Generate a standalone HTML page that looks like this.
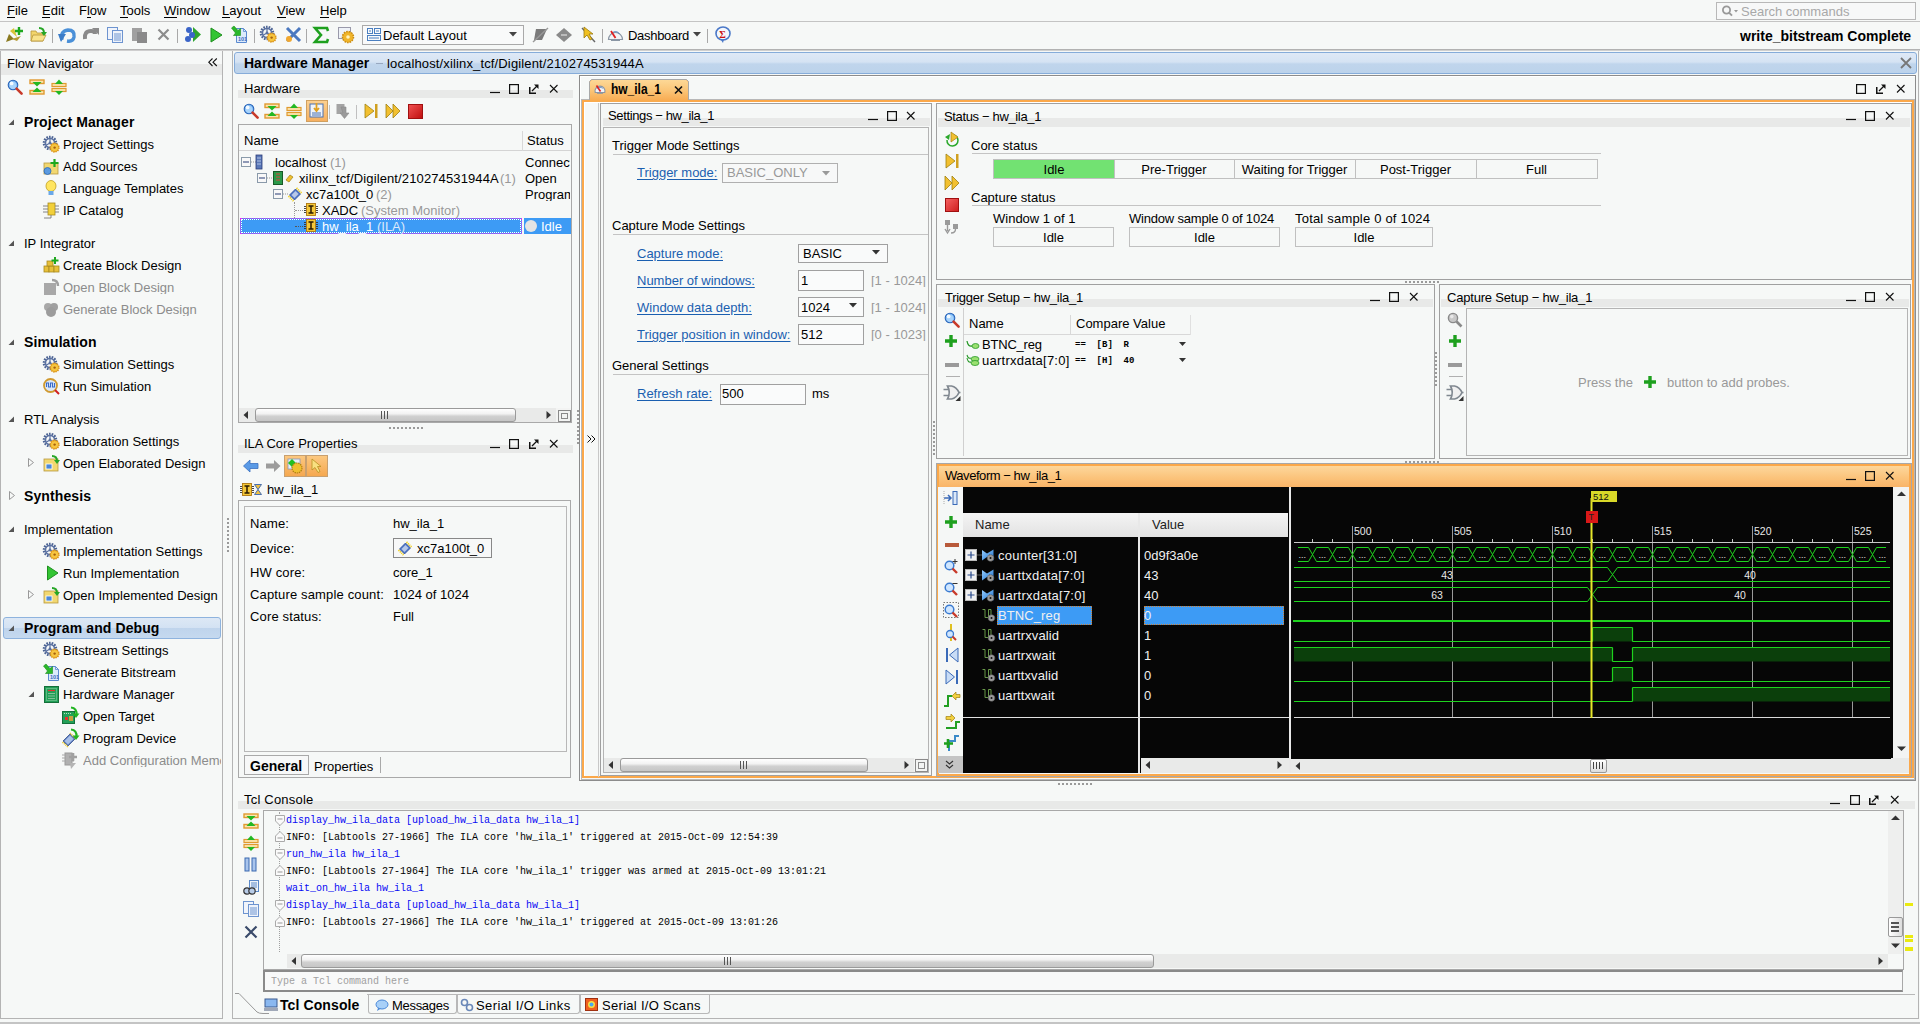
<!DOCTYPE html>
<html><head><meta charset="utf-8"><title>Vivado Hardware Manager</title>
<style>
html,body{margin:0;padding:0;}
body{width:1920px;height:1024px;overflow:hidden;position:relative;background:#f6f8f7;font-family:'Liberation Sans', sans-serif;}
body>div{position:absolute;}
.t{position:absolute;white-space:nowrap;line-height:1;}
svg{overflow:visible;}
</style></head><body>
<div class="t" style="left:7px;top:4.00px;font-size:13px;font-family:'Liberation Sans', sans-serif;color:#000;">File</div><div class="t" style="left:42px;top:4.00px;font-size:13px;font-family:'Liberation Sans', sans-serif;color:#000;">Edit</div><div class="t" style="left:79px;top:4.00px;font-size:13px;font-family:'Liberation Sans', sans-serif;color:#000;">Flow</div><div class="t" style="left:120px;top:4.00px;font-size:13px;font-family:'Liberation Sans', sans-serif;color:#000;">Tools</div><div class="t" style="left:164px;top:4.00px;font-size:13px;font-family:'Liberation Sans', sans-serif;color:#000;">Window</div><div class="t" style="left:222px;top:4.00px;font-size:13px;font-family:'Liberation Sans', sans-serif;color:#000;">Layout</div><div class="t" style="left:277px;top:4.00px;font-size:13px;font-family:'Liberation Sans', sans-serif;color:#000;">View</div><div class="t" style="left:320px;top:4.00px;font-size:13px;font-family:'Liberation Sans', sans-serif;color:#000;">Help</div><div style="left:7px;top:17px;width:8px;height:1px;background:#000"></div><div style="left:42px;top:17px;width:8px;height:1px;background:#000"></div><div style="left:87px;top:17px;width:4px;height:1px;background:#000"></div><div style="left:120px;top:17px;width:8px;height:1px;background:#000"></div><div style="left:164px;top:17px;width:13px;height:1px;background:#000"></div><div style="left:222px;top:17px;width:8px;height:1px;background:#000"></div><div style="left:277px;top:17px;width:9px;height:1px;background:#000"></div><div style="left:320px;top:17px;width:9px;height:1px;background:#000"></div><div style="left:0px;top:21px;width:1920px;height:1px;background:#c4c4c4"></div><div style="left:1716px;top:2px;width:200px;height:18px;box-sizing:border-box;border:1px solid #b8b8b8;background:#f7f8f8;"></div><svg style="position:absolute;left:1721px;top:5px;" width="20" height="12" viewBox="0 0 20 12"><circle cx="5.5" cy="5" r="3.6" fill="none" stroke="#999" stroke-width="1.8"/><line x1="8" y1="7.6" x2="11" y2="10.6" stroke="#999" stroke-width="2"/><path d="M13 5 L17 5 L15 7.5 Z" fill="#999"/></svg><div class="t" style="left:1741px;top:5.00px;font-size:13px;font-family:'Liberation Sans', sans-serif;color:#a8a8a8;">Search commands</div><div style="left:52px;top:29px;width:1px;height:14px;background:#a8a8a8"></div><div style="left:177px;top:29px;width:1px;height:14px;background:#a8a8a8"></div><div style="left:254px;top:29px;width:1px;height:14px;background:#a8a8a8"></div><div style="left:306px;top:29px;width:1px;height:14px;background:#a8a8a8"></div><div style="left:602px;top:29px;width:1px;height:14px;background:#a8a8a8"></div><div style="left:707px;top:29px;width:1px;height:14px;background:#a8a8a8"></div><svg style="position:absolute;left:5px;top:26px;" width="18" height="17" viewBox="0 0 18 17"><path d="M1 16 L4 8 L9 13 Z" fill="#8a7a20"/><path d="M5 5 L9 2 L12 11 Z" fill="#d8c43a"/><path d="M7 13 L16 10 L12 15 Z" fill="#b49a32"/><path d="M14 1 L14 9 M10 5 L18 5" stroke="#1ea81e" stroke-width="2.4"/></svg><svg style="position:absolute;left:30px;top:27px;" width="17" height="16" viewBox="0 0 17 16"><path d="M1 4 L6 4 L7 6 L13 6 L13 14 L1 14 Z" fill="#f2d56b" stroke="#b8963a" stroke-width="0.8"/><path d="M3 8 L16 8 L13 14 L1 14 Z" fill="#f8e28a" stroke="#b8963a" stroke-width="0.8"/><path d="M9 1 Q14 1 14 6" fill="none" stroke="#26a626" stroke-width="2"/><path d="M11 5 L17 5 L14 9 Z" fill="#26a626"/></svg><svg style="position:absolute;left:58px;top:27px;" width="18" height="16" viewBox="0 0 18 16"><path d="M4 13 Q2 4 10 3 Q17 3 16 10 Q15 15 9 14" fill="none" stroke="#4a90d8" stroke-width="3.5"/><path d="M0 7 L8 7 L3 15 Z" fill="#3a7cc8"/></svg><svg style="position:absolute;left:82px;top:27px;" width="18" height="16" viewBox="0 0 18 16"><path d="M3 12 Q2 4 9 4 Q13 4 13 7" fill="none" stroke="#8a8a8a" stroke-width="4"/><path d="M10 1 L17 1 L17 8 Z" fill="#8a8a8a"/></svg><svg style="position:absolute;left:107px;top:27px;" width="17" height="16" viewBox="0 0 17 16"><rect x="0.5" y="0.5" width="10" height="12" fill="#f0f4fb" stroke="#6d94d0"/><rect x="5.5" y="3.5" width="10" height="12" fill="#eef3fb" stroke="#6d94d0"/><path d="M7 7 H14 M7 9 H14 M7 11 H14 M7 13 H14" stroke="#6d94d0"/></svg><svg style="position:absolute;left:131px;top:27px;" width="17" height="16" viewBox="0 0 17 16"><rect x="1" y="1" width="10" height="13" fill="#a0a0a0"/><rect x="6" y="5" width="10" height="11" fill="#8a8a8a"/></svg><svg style="position:absolute;left:157px;top:28px;" width="13" height="13" viewBox="0 0 13 13"><path d="M1.5 1.5 L11.5 11.5 M11.5 1.5 L1.5 11.5" stroke="#8c8c8c" stroke-width="2.2"/></svg><svg style="position:absolute;left:184px;top:26px;" width="17" height="17" viewBox="0 0 17 17"><path d="M9 1 L17 8.5 L9 16 Z" fill="#2ea52e"/><circle cx="5" cy="4" r="3" fill="#3a64c8"/><circle cx="8" cy="9" r="3" fill="#3a64c8"/><circle cx="4" cy="13" r="3" fill="#3a64c8"/></svg><svg style="position:absolute;left:209px;top:27px;" width="14" height="16" viewBox="0 0 14 16"><path d="M2 1 L13 8 L2 15 Z" fill="#33c533" stroke="#1f8f1f" stroke-width="1"/></svg><svg style="position:absolute;left:231px;top:26px;" width="18" height="18" viewBox="0 0 18 18"><path d="M5.5 2.5 H12.5 L15.5 5.5 V16.5 H5.5 Z" fill="#dcebfb" stroke="#5a8ad0"/><path d="M12.5 2.5 V5.5 H15.5" fill="none" stroke="#5a8ad0" stroke-width="0.8"/><text x="7" y="14.5" font-size="5.5" font-weight="bold" fill="#3a6ac0" font-family="Liberation Sans">101</text><path d="M0.5 2 L3 0 L7 4.5 L9.5 2.5 L9.5 9.5 L2.5 9.5 L4.5 7 Z" fill="#2ab82a" stroke="#1a8a1a" stroke-width="0.6"/></svg><svg style="position:absolute;left:260px;top:26px;" width="17" height="17" viewBox="0 0 17 17"><circle cx="7" cy="7" r="6.1" fill="none" stroke="#4d6494" stroke-width="2.4" stroke-dasharray="1.6 1.1"/><circle cx="7" cy="7" r="4.6" fill="none" stroke="#5b72a2" stroke-width="1.7"/><circle cx="7" cy="7" r="1.4" fill="#5b72a2"/><path d="M7 7 V2.5 M7 7 L3 9.3 M7 7 L11 9.3" stroke="#5b72a2" stroke-width="1.2"/><circle cx="11.6" cy="11.6" r="4.3" fill="#f4bc30" stroke="#d89018" stroke-width="1.6" stroke-dasharray="1.3 0.9"/><circle cx="11.6" cy="11.6" r="3.2" fill="#f6c640"/><circle cx="11.6" cy="11.6" r="1.2" fill="#a8600c"/></svg><svg style="position:absolute;left:285px;top:26px;" width="17" height="17" viewBox="0 0 17 17"><path d="M2 2 L15 15 M15 2 L2 15" stroke="#4a78c0" stroke-width="3"/><circle cx="4" cy="13" r="3" fill="#f0a830"/></svg><svg style="position:absolute;left:314px;top:27px;" width="15" height="16" viewBox="0 0 15 16"><path d="M14 4 L13 1 L1 1 L7 8 L1 15 L13 15 L14 12" fill="none" stroke="#1ea01e" stroke-width="2.6"/></svg><svg style="position:absolute;left:338px;top:27px;" width="17" height="17" viewBox="0 0 17 17"><rect x="0.5" y="0.5" width="12" height="11" fill="#eef2f8" stroke="#99a"/><circle cx="10" cy="10" r="5.5" fill="#f0b52a" stroke="#c98a10" stroke-width="1.5" stroke-dasharray="1.6 1"/><circle cx="10" cy="10" r="1.8" fill="#fff4c0"/></svg><svg style="position:absolute;left:532px;top:27px;" width="17" height="16" viewBox="0 0 17 16"><path d="M4 2 L15 2 L10 13 L2 13 Z" fill="#7a7a7a"/><path d="M1 15 L16 1" stroke="#999" stroke-width="1.4"/></svg><svg style="position:absolute;left:556px;top:27px;" width="17" height="16" viewBox="0 0 17 16"><path d="M8 1 L16 8 L8 15 L0 8 Z" fill="#8a8a8a"/><path d="M5 8 L11 8" stroke="#bbb" stroke-width="2"/></svg><svg style="position:absolute;left:580px;top:26px;" width="17" height="18" viewBox="0 0 17 18"><path d="M2 2 L15 16" stroke="#666" stroke-width="1.4"/><path d="M4 1 L4 12 L7 9 L10 14 L12 13 L9 8 L13 8 Z" fill="#f0c020" stroke="#9a7a10" stroke-width="0.8"/></svg><svg style="position:absolute;left:607px;top:28px;" width="17" height="14" viewBox="0 0 17 14"><path d="M1.5 11.5 A7 7 0 1 1 15.5 11.5 Z" fill="#f2f4f6" stroke="#8a96a4" stroke-width="1.2"/><path d="M4.5 6 A4.5 4.5 0 0 1 12.5 6" fill="none" stroke="#4a7ab8" stroke-width="0.9"/><path d="M4 3 L8.5 10" stroke="#e02020" stroke-width="1.8"/><rect x="4" y="11.5" width="9" height="1.5" fill="#8a96a4"/></svg><div class="t" style="left:628px;top:29.00px;font-size:13px;font-family:'Liberation Sans', sans-serif;color:#000;letter-spacing:-0.3px">Dashboard</div><svg style="position:absolute;left:693px;top:32px;" width="9" height="5" viewBox="0 0 9 5"><path d="M0 0 L8 0 L4 4.5 Z" fill="#444"/></svg><svg style="position:absolute;left:715px;top:26px;" width="17" height="17" viewBox="0 0 17 17"><ellipse cx="8" cy="7.5" rx="7" ry="6.5" fill="#f4f7fc" stroke="#4a78c8" stroke-width="1.6"/><path d="M6 14 L8 17 L9 13" fill="#4a78c8"/><text x="4.3" y="11.5" font-size="10" font-weight="bold" fill="#cc1111" font-family="Liberation Serif">&#931;</text></svg><div style="left:362px;top:25px;width:162px;height:20px;box-sizing:border-box;border:1px solid #a9a9a9;background:#f9fafa;"></div><svg style="position:absolute;left:367px;top:28px;" width="14" height="14" viewBox="0 0 14 14"><rect x="0.5" y="0.5" width="5" height="5" fill="none" stroke="#4a7fc0"/><rect x="7.5" y="0.5" width="6" height="5" fill="none" stroke="#4a7fc0"/><rect x="0.5" y="7.5" width="13" height="5" fill="none" stroke="#4a7fc0"/><line x1="2" y1="3" x2="4" y2="3" stroke="#4a7fc0"/><line x1="9" y1="3" x2="12" y2="3" stroke="#4a7fc0"/><line x1="2" y1="10" x2="12" y2="10" stroke="#4a7fc0"/></svg><div class="t" style="left:383px;top:29.00px;font-size:13px;font-family:'Liberation Sans', sans-serif;color:#000;">Default Layout</div><svg style="position:absolute;left:509px;top:32px;" width="9" height="5" viewBox="0 0 9 5"><path d="M0 0 L8 0 L4 4.5 Z" fill="#444"/></svg><div class="t" style="left:1740px;top:29.15px;font-size:14px;font-family:'Liberation Sans', sans-serif;font-weight:bold;color:#000;">write_bitstream Complete</div><div style="left:0px;top:49px;width:1920px;height:1px;background:#b2b2b2"></div><div style="left:0px;top:50px;width:1920px;height:1px;background:#cfcfcf"></div><div style="left:0px;top:51px;width:1px;height:968px;background:#b4b4b4"></div><div style="left:222px;top:51px;width:1px;height:968px;background:#b4b4b4"></div><div style="left:0px;top:1018px;width:223px;height:1px;background:#b4b4b4"></div><div style="left:1px;top:64px;width:221px;height:11px;background:#e8e9e8"></div><div class="t" style="left:7px;top:57.00px;font-size:13px;font-family:'Liberation Sans', sans-serif;color:#000;">Flow Navigator</div><svg style="position:absolute;left:208px;top:58px;" width="10" height="9" viewBox="0 0 10 9"><path d="M4.5 0.5 L0.8 4.2 L4.5 8 M8.8 0.5 L5 4.2 L8.8 8" fill="none" stroke="#111" stroke-width="1.1"/></svg><svg style="position:absolute;left:43px;top:136px;" width="17" height="17" viewBox="0 0 17 17"><circle cx="7" cy="7" r="6.1" fill="none" stroke="#4d6494" stroke-width="2.4" stroke-dasharray="1.6 1.1"/><circle cx="7" cy="7" r="4.6" fill="none" stroke="#5b72a2" stroke-width="1.7"/><circle cx="7" cy="7" r="1.4" fill="#5b72a2"/><path d="M7 7 V2.5 M7 7 L3 9.3 M7 7 L11 9.3" stroke="#5b72a2" stroke-width="1.2"/><circle cx="11.6" cy="11.6" r="4.3" fill="#f4bc30" stroke="#d89018" stroke-width="1.6" stroke-dasharray="1.3 0.9"/><circle cx="11.6" cy="11.6" r="3.2" fill="#f6c640"/><circle cx="11.6" cy="11.6" r="1.2" fill="#a8600c"/></svg><svg style="position:absolute;left:43px;top:356px;" width="17" height="17" viewBox="0 0 17 17"><circle cx="7" cy="7" r="6.1" fill="none" stroke="#4d6494" stroke-width="2.4" stroke-dasharray="1.6 1.1"/><circle cx="7" cy="7" r="4.6" fill="none" stroke="#5b72a2" stroke-width="1.7"/><circle cx="7" cy="7" r="1.4" fill="#5b72a2"/><path d="M7 7 V2.5 M7 7 L3 9.3 M7 7 L11 9.3" stroke="#5b72a2" stroke-width="1.2"/><circle cx="11.6" cy="11.6" r="4.3" fill="#f4bc30" stroke="#d89018" stroke-width="1.6" stroke-dasharray="1.3 0.9"/><circle cx="11.6" cy="11.6" r="3.2" fill="#f6c640"/><circle cx="11.6" cy="11.6" r="1.2" fill="#a8600c"/></svg><svg style="position:absolute;left:43px;top:433px;" width="17" height="17" viewBox="0 0 17 17"><circle cx="7" cy="7" r="6.1" fill="none" stroke="#4d6494" stroke-width="2.4" stroke-dasharray="1.6 1.1"/><circle cx="7" cy="7" r="4.6" fill="none" stroke="#5b72a2" stroke-width="1.7"/><circle cx="7" cy="7" r="1.4" fill="#5b72a2"/><path d="M7 7 V2.5 M7 7 L3 9.3 M7 7 L11 9.3" stroke="#5b72a2" stroke-width="1.2"/><circle cx="11.6" cy="11.6" r="4.3" fill="#f4bc30" stroke="#d89018" stroke-width="1.6" stroke-dasharray="1.3 0.9"/><circle cx="11.6" cy="11.6" r="3.2" fill="#f6c640"/><circle cx="11.6" cy="11.6" r="1.2" fill="#a8600c"/></svg><svg style="position:absolute;left:43px;top:543px;" width="17" height="17" viewBox="0 0 17 17"><circle cx="7" cy="7" r="6.1" fill="none" stroke="#4d6494" stroke-width="2.4" stroke-dasharray="1.6 1.1"/><circle cx="7" cy="7" r="4.6" fill="none" stroke="#5b72a2" stroke-width="1.7"/><circle cx="7" cy="7" r="1.4" fill="#5b72a2"/><path d="M7 7 V2.5 M7 7 L3 9.3 M7 7 L11 9.3" stroke="#5b72a2" stroke-width="1.2"/><circle cx="11.6" cy="11.6" r="4.3" fill="#f4bc30" stroke="#d89018" stroke-width="1.6" stroke-dasharray="1.3 0.9"/><circle cx="11.6" cy="11.6" r="3.2" fill="#f6c640"/><circle cx="11.6" cy="11.6" r="1.2" fill="#a8600c"/></svg><svg style="position:absolute;left:43px;top:642px;" width="17" height="17" viewBox="0 0 17 17"><circle cx="7" cy="7" r="6.1" fill="none" stroke="#4d6494" stroke-width="2.4" stroke-dasharray="1.6 1.1"/><circle cx="7" cy="7" r="4.6" fill="none" stroke="#5b72a2" stroke-width="1.7"/><circle cx="7" cy="7" r="1.4" fill="#5b72a2"/><path d="M7 7 V2.5 M7 7 L3 9.3 M7 7 L11 9.3" stroke="#5b72a2" stroke-width="1.2"/><circle cx="11.6" cy="11.6" r="4.3" fill="#f4bc30" stroke="#d89018" stroke-width="1.6" stroke-dasharray="1.3 0.9"/><circle cx="11.6" cy="11.6" r="3.2" fill="#f6c640"/><circle cx="11.6" cy="11.6" r="1.2" fill="#a8600c"/></svg><svg style="position:absolute;left:43px;top:159px;" width="17" height="16" viewBox="0 0 17 16"><rect x="1" y="4" width="14" height="11" fill="#f2d870" stroke="#b89a40" stroke-width="0.8"/><circle cx="4.5" cy="12" r="3.5" fill="#5a9ae0" stroke="#2a68b8" stroke-width="0.8"/><path d="M11.5 0 L11.5 8 M7.5 4 L15.5 4" stroke="#1ea81e" stroke-width="2.2"/></svg><svg style="position:absolute;left:45px;top:180px;" width="12" height="17" viewBox="0 0 12 17"><ellipse cx="6" cy="6" rx="5" ry="5.5" fill="#ffe560" stroke="#c0a020" stroke-width="0.8"/><rect x="3.5" y="11" width="5" height="4" fill="#6aa8e8"/></svg><svg style="position:absolute;left:43px;top:202px;" width="17" height="17" viewBox="0 0 17 17"><rect x="5" y="1" width="7" height="12" fill="#f2d03a" stroke="#a88a20" stroke-width="0.8"/><path d="M0 4 H5 M0 7 H5 M0 10 H5 M12 4 H16 M12 7 H16 M12 10 H16 M1 16 H8 M8 13 V16" stroke="#777" stroke-width="0.9"/></svg><svg style="position:absolute;left:43px;top:257px;" width="17" height="17" viewBox="0 0 17 17"><rect x="1" y="9" width="5" height="6" fill="#e8c03a" stroke="#a88a20" stroke-width="0.8"/><rect x="6" y="9" width="5" height="6" fill="#e8c03a" stroke="#a88a20" stroke-width="0.8"/><rect x="11" y="9" width="5" height="6" fill="#e8c03a" stroke="#a88a20" stroke-width="0.8"/><rect x="4" y="4" width="6" height="5" fill="#e8c03a" stroke="#a88a20" stroke-width="0.8"/><path d="M12 0 L12 7 M8.5 3.5 L15.5 3.5" stroke="#1ea81e" stroke-width="2"/></svg><svg style="position:absolute;left:43px;top:279px;" width="17" height="17" viewBox="0 0 17 17"><rect x="1" y="4" width="12" height="12" fill="#a8a8a8"/><path d="M9 1 Q15 1 15 7" fill="none" stroke="#a0a0a0" stroke-width="2.4"/></svg><svg style="position:absolute;left:43px;top:301px;" width="17" height="17" viewBox="0 0 17 17"><circle cx="5" cy="6" r="4" fill="#a8a8a8"/><circle cx="11" cy="6" r="4" fill="#a0a0a0"/><circle cx="8" cy="11" r="5" fill="#9c9c9c"/></svg><svg style="position:absolute;left:43px;top:378px;" width="17" height="17" viewBox="0 0 17 17"><circle cx="7.5" cy="7.5" r="6.5" fill="#dbe8f8" stroke="#d09a30" stroke-width="1.8"/><path d="M3.5 9 V5 H5.5 V9 H7.5 V5 H9.5 V9 H11.5 V5" fill="none" stroke="#3a6ac8" stroke-width="1.1"/><path d="M12 12 L16 16" stroke="#d02020" stroke-width="2"/></svg><svg style="position:absolute;left:43px;top:456px;" width="17" height="16" viewBox="0 0 17 16"><rect x="1" y="3" width="14" height="12" fill="#f2d870" stroke="#b89a40" stroke-width="0.8"/><rect x="3" y="8" width="6" height="5" fill="#4a88d8" stroke="#fff" stroke-width="0.8"/><path d="M9 0 Q14 0 14 5" fill="none" stroke="#26a626" stroke-width="2"/><path d="M11 4 L17 4 L14 8 Z" fill="#26a626"/></svg><svg style="position:absolute;left:43px;top:588px;" width="17" height="16" viewBox="0 0 17 16"><rect x="1" y="3" width="14" height="12" fill="#f2d870" stroke="#b89a40" stroke-width="0.8"/><rect x="3" y="8" width="6" height="5" fill="#4a88d8" stroke="#fff" stroke-width="0.8"/><path d="M9 0 Q14 0 14 5" fill="none" stroke="#26a626" stroke-width="2"/><path d="M11 4 L17 4 L14 8 Z" fill="#26a626"/></svg><svg style="position:absolute;left:46px;top:565px;" width="13" height="16" viewBox="0 0 13 16"><path d="M1.5 1 L12 8 L1.5 15 Z" fill="#33c533" stroke="#1f8f1f"/></svg><svg style="position:absolute;left:43px;top:664px;" width="18" height="18" viewBox="0 0 18 18"><path d="M5.5 2.5 H12.5 L15.5 5.5 V16.5 H5.5 Z" fill="#dcebfb" stroke="#5a8ad0"/><path d="M12.5 2.5 V5.5 H15.5" fill="none" stroke="#5a8ad0" stroke-width="0.8"/><text x="7" y="14.5" font-size="5.5" font-weight="bold" fill="#3a6ac0" font-family="Liberation Sans">101</text><path d="M0.5 2 L3 0 L7 4.5 L9.5 2.5 L9.5 9.5 L2.5 9.5 L4.5 7 Z" fill="#2ab82a" stroke="#1a8a1a" stroke-width="0.6"/></svg><svg style="position:absolute;left:44px;top:686px;" width="15" height="17" viewBox="0 0 15 17"><rect x="0.5" y="0.5" width="14" height="16" fill="#22a058" stroke="#14703a"/><rect x="2.5" y="2.5" width="10" height="12" fill="none" stroke="#b8e0c0" stroke-width="0.8" stroke-dasharray="1 1"/><path d="M4 4.5 H11" stroke="#e83030" stroke-width="1.2"/><path d="M4 7.5 H11 M4 10 H11 M4 12.5 H11" stroke="#9ac8a8" stroke-width="0.8"/></svg><svg style="position:absolute;left:62px;top:707px;" width="17" height="18" viewBox="0 0 17 18"><rect x="0.5" y="4.5" width="12" height="12" fill="#22a058" stroke="#14703a"/><path d="M2 6.5 H10" stroke="#b8e0c0" stroke-dasharray="1 1"/><rect x="3" y="10" width="3" height="3" fill="#e83030"/><rect x="7" y="9" width="4" height="5" fill="#c8a040"/><path d="M9 0.5 Q15 1 14.5 8" fill="none" stroke="#22b422" stroke-width="2.2"/><path d="M10.5 6.5 L17.5 6.5 L14 11 Z" fill="#22b422"/></svg><svg style="position:absolute;left:62px;top:729px;" width="17" height="18" viewBox="0 0 17 18"><path d="M1 12 L8 5 L13 10 L6 17 Z" fill="#5c7cc0" stroke="#34508a" stroke-width="0.8"/><path d="M2.5 12 L8 6.5 L11.5 10 L6 15.5 Z" fill="#a8c0e8"/><path d="M0.5 13 L6 18 M8 4 L13.5 9.5" stroke="#e8c830" stroke-width="1.6" stroke-dasharray="1.2 0.8"/><path d="M9 0.5 Q15 1 14.5 8" fill="none" stroke="#22b422" stroke-width="2.2"/><path d="M10.5 6.5 L17.5 6.5 L14 11 Z" fill="#22b422"/></svg><svg style="position:absolute;left:62px;top:751px;" width="17" height="18" viewBox="0 0 17 18"><rect x="3" y="2" width="7" height="12" fill="#b0b0b0" stroke="#9a9a9a"/><path d="M0 4 H3 M0 7 H3 M0 10 H3 M10 4 H12 M10 7 H12 M10 10 H12" stroke="#a8a8a8"/><path d="M11 2 V10 M7 6 H15" stroke="#a0a0a0" stroke-width="2.6"/><path d="M8 12 L14 12 L9 18 Z" fill="#b4b4b4"/></svg><svg style="position:absolute;left:7px;top:79px;" width="16" height="16" viewBox="0 0 16 16"><circle cx="6" cy="6" r="4.8" fill="#7ab8f4" stroke="#2a64b8" stroke-width="1.1"/><circle cx="6" cy="6.5" r="3.4" fill="#a8d4fc"/><circle cx="4.6" cy="4.4" r="1.9" fill="#f4faff"/><path d="M9.6 9.6 L14.6 14.6" stroke="#c83a2a" stroke-width="2.6" stroke-linecap="round"/></svg><svg style="position:absolute;left:29px;top:79px;" width="16" height="16" viewBox="0 0 16 16"><rect x="1" y="1" width="14" height="3.5" fill="#fbe6b0" stroke="#e09a30" stroke-width="1.4"/><rect x="1" y="11.5" width="14" height="3.5" fill="#fbe6b0" stroke="#e09a30" stroke-width="1.4"/><path d="M3.5 3 L12.5 3 L8 7.5 Z" fill="#22b822"/><path d="M3.5 13 L12.5 13 L8 8.5 Z" fill="#22b822"/></svg><svg style="position:absolute;left:51px;top:79px;" width="16" height="16" viewBox="0 0 16 16"><rect x="1" y="4.5" width="14" height="3" fill="#fbe6b0" stroke="#e09a30" stroke-width="1.2"/><rect x="1" y="9.5" width="14" height="3" fill="#fbe6b0" stroke="#e09a30" stroke-width="1.2"/><path d="M4 5 L12 5 L8 0.5 Z" fill="#22b822"/><path d="M4 12 L12 12 L8 16 Z" fill="#22b822"/></svg><div style="left:227px;top:518px;width:2px;height:2px;background:#9a9a9a"></div><div style="left:227px;top:522px;width:2px;height:2px;background:#9a9a9a"></div><div style="left:227px;top:526px;width:2px;height:2px;background:#9a9a9a"></div><div style="left:227px;top:530px;width:2px;height:2px;background:#9a9a9a"></div><div style="left:227px;top:534px;width:2px;height:2px;background:#9a9a9a"></div><div style="left:227px;top:538px;width:2px;height:2px;background:#9a9a9a"></div><div style="left:227px;top:542px;width:2px;height:2px;background:#9a9a9a"></div><div style="left:227px;top:546px;width:2px;height:2px;background:#9a9a9a"></div><div style="left:227px;top:550px;width:2px;height:2px;background:#9a9a9a"></div><div style="left:3px;top:617px;width:216px;height:20px;border:1px solid #8eb3de;border-radius:3px;background:linear-gradient(#dde8f5,#d3e2f3 50%,#bfd4ec 51%,#c5d9ef)"></div><div class="t" style="left:24px;top:115.15px;font-size:14px;font-family:'Liberation Sans', sans-serif;font-weight:bold;color:#000;letter-spacing:0.1px">Project Manager</div><svg style="position:absolute;left:8px;top:119px;" width="7" height="7" viewBox="0 0 7 7"><path d="M6 0.5 L6 6 L0.5 6 Z" fill="#555"/></svg><div class="t" style="left:63px;top:138.00px;font-size:13px;font-family:'Liberation Sans', sans-serif;color:#000;">Project Settings</div><div class="t" style="left:63px;top:160.00px;font-size:13px;font-family:'Liberation Sans', sans-serif;color:#000;">Add Sources</div><div class="t" style="left:63px;top:182.00px;font-size:13px;font-family:'Liberation Sans', sans-serif;color:#000;">Language Templates</div><div class="t" style="left:63px;top:204.00px;font-size:13px;font-family:'Liberation Sans', sans-serif;color:#000;">IP Catalog</div><div class="t" style="left:24px;top:237.00px;font-size:13px;font-family:'Liberation Sans', sans-serif;color:#000;">IP Integrator</div><svg style="position:absolute;left:8px;top:240px;" width="7" height="7" viewBox="0 0 7 7"><path d="M6 0.5 L6 6 L0.5 6 Z" fill="#555"/></svg><div class="t" style="left:63px;top:259.00px;font-size:13px;font-family:'Liberation Sans', sans-serif;color:#000;">Create Block Design</div><div class="t" style="left:63px;top:281.00px;font-size:13px;font-family:'Liberation Sans', sans-serif;color:#8c8c8c;width:158px;overflow:hidden">Open Block Design</div><div class="t" style="left:63px;top:303.00px;font-size:13px;font-family:'Liberation Sans', sans-serif;color:#8c8c8c;width:158px;overflow:hidden">Generate Block Design</div><div class="t" style="left:24px;top:335.15px;font-size:14px;font-family:'Liberation Sans', sans-serif;font-weight:bold;color:#000;letter-spacing:0.1px">Simulation</div><svg style="position:absolute;left:8px;top:339px;" width="7" height="7" viewBox="0 0 7 7"><path d="M6 0.5 L6 6 L0.5 6 Z" fill="#555"/></svg><div class="t" style="left:63px;top:358.00px;font-size:13px;font-family:'Liberation Sans', sans-serif;color:#000;">Simulation Settings</div><div class="t" style="left:63px;top:380.00px;font-size:13px;font-family:'Liberation Sans', sans-serif;color:#000;">Run Simulation</div><div class="t" style="left:24px;top:413.00px;font-size:13px;font-family:'Liberation Sans', sans-serif;color:#000;">RTL Analysis</div><svg style="position:absolute;left:8px;top:416px;" width="7" height="7" viewBox="0 0 7 7"><path d="M6 0.5 L6 6 L0.5 6 Z" fill="#555"/></svg><div class="t" style="left:63px;top:435.00px;font-size:13px;font-family:'Liberation Sans', sans-serif;color:#000;">Elaboration Settings</div><div class="t" style="left:63px;top:457.00px;font-size:13px;font-family:'Liberation Sans', sans-serif;color:#000;">Open Elaborated Design</div><svg style="position:absolute;left:28px;top:458px;" width="7" height="10" viewBox="0 0 7 10"><path d="M0.5 0.5 L5.5 4.5 L0.5 8.5 Z" fill="none" stroke="#999"/></svg><div class="t" style="left:24px;top:489.15px;font-size:14px;font-family:'Liberation Sans', sans-serif;font-weight:bold;color:#000;letter-spacing:0.1px">Synthesis</div><svg style="position:absolute;left:9px;top:491px;" width="7" height="10" viewBox="0 0 7 10"><path d="M0.5 0.5 L5.5 4.5 L0.5 8.5 Z" fill="none" stroke="#999"/></svg><div class="t" style="left:24px;top:523.00px;font-size:13px;font-family:'Liberation Sans', sans-serif;color:#000;">Implementation</div><svg style="position:absolute;left:8px;top:526px;" width="7" height="7" viewBox="0 0 7 7"><path d="M6 0.5 L6 6 L0.5 6 Z" fill="#555"/></svg><div class="t" style="left:63px;top:545.00px;font-size:13px;font-family:'Liberation Sans', sans-serif;color:#000;">Implementation Settings</div><div class="t" style="left:63px;top:567.00px;font-size:13px;font-family:'Liberation Sans', sans-serif;color:#000;">Run Implementation</div><div class="t" style="left:63px;top:589.00px;font-size:13px;font-family:'Liberation Sans', sans-serif;color:#000;">Open Implemented Design</div><svg style="position:absolute;left:28px;top:590px;" width="7" height="10" viewBox="0 0 7 10"><path d="M0.5 0.5 L5.5 4.5 L0.5 8.5 Z" fill="none" stroke="#999"/></svg><div class="t" style="left:24px;top:621.15px;font-size:14px;font-family:'Liberation Sans', sans-serif;font-weight:bold;color:#000;letter-spacing:0.1px">Program and Debug</div><svg style="position:absolute;left:8px;top:625px;" width="7" height="7" viewBox="0 0 7 7"><path d="M6 0.5 L6 6 L0.5 6 Z" fill="#555"/></svg><div class="t" style="left:63px;top:644.00px;font-size:13px;font-family:'Liberation Sans', sans-serif;color:#000;">Bitstream Settings</div><div class="t" style="left:63px;top:666.00px;font-size:13px;font-family:'Liberation Sans', sans-serif;color:#000;">Generate Bitstream</div><div class="t" style="left:63px;top:688.00px;font-size:13px;font-family:'Liberation Sans', sans-serif;color:#000;">Hardware Manager</div><svg style="position:absolute;left:28px;top:691px;" width="7" height="7" viewBox="0 0 7 7"><path d="M6 0.5 L6 6 L0.5 6 Z" fill="#555"/></svg><div class="t" style="left:83px;top:710.00px;font-size:13px;font-family:'Liberation Sans', sans-serif;color:#000;">Open Target</div><div class="t" style="left:83px;top:732.00px;font-size:13px;font-family:'Liberation Sans', sans-serif;color:#000;">Program Device</div><div class="t" style="left:83px;top:754.00px;font-size:13px;font-family:'Liberation Sans', sans-serif;color:#8c8c8c;width:138px;overflow:hidden">Add Configuration Memory Device</div><div style="left:221px;top:750px;width:1px;height:26px;background:#f6f8f7"></div><div style="left:232px;top:51px;width:1px;height:968px;background:#b4b4b4"></div><div style="left:1918px;top:51px;width:1px;height:968px;background:#b4b4b4"></div><div style="left:232px;top:1018px;width:1687px;height:1px;background:#b4b4b4"></div><div style="left:0px;top:1022px;width:1920px;height:2px;background:#c4c4c4"></div><div style="left:234px;top:52px;width:1681px;height:20px;border:1px solid #86acd9;border-radius:3px;background:linear-gradient(#dfe9f6,#d5e3f3 45%,#c0d5ec 55%,#bcd3eb)"></div><div class="t" style="left:244px;top:56.15px;font-size:14px;font-family:'Liberation Sans', sans-serif;font-weight:bold;color:#000;">Hardware Manager</div><div style="left:376px;top:63px;width:7px;height:1px;background:#98a8c0"></div><div class="t" style="left:387px;top:57.00px;font-size:13px;font-family:'Liberation Sans', sans-serif;color:#000;letter-spacing:0.14px">localhost/xilinx_tcf/Digilent/210274531944A</div><svg style="position:absolute;left:1900px;top:57px;" width="12" height="12" viewBox="0 0 12 12"><path d="M1 1 L11 11 M11 1 L1 11" stroke="#777" stroke-width="1.8"/></svg><div style="left:238px;top:90px;width:335px;height:8px;background:#e8e9e8"></div><div class="t" style="left:244px;top:82.00px;font-size:13px;font-family:'Liberation Sans', sans-serif;color:#000;">Hardware</div><svg style="position:absolute;left:490px;top:84px;" width="10" height="10" viewBox="0 0 10 10"><line x1="0" y1="8.5" x2="10" y2="8.5" stroke="#111" stroke-width="1.2"/></svg><svg style="position:absolute;left:509px;top:84px;" width="10" height="10" viewBox="0 0 10 10"><rect x="0.6" y="0.6" width="8.8" height="8.8" fill="none" stroke="#111" stroke-width="1.2"/></svg><svg style="position:absolute;left:529px;top:84px;" width="10" height="10" viewBox="0 0 10 10"><path d="M0.75 3 L0.75 9.25 L7 9.25" fill="none" stroke="#111" stroke-width="1.5"/><path d="M3 7 L8.5 1.5" stroke="#111" stroke-width="1.3"/><path d="M5 0.5 L9.5 0.5 L9.5 5 Z" fill="#111"/></svg><svg style="position:absolute;left:549px;top:84px;" width="10" height="10" viewBox="0 0 10 10"><path d="M1 1 L8.5 8.5 M8.5 1 L1 8.5" stroke="#111" stroke-width="1.1"/></svg><svg style="position:absolute;left:243px;top:103px;" width="16" height="16" viewBox="0 0 16 16"><circle cx="6" cy="6" r="4.8" fill="#7ab8f4" stroke="#2a64b8" stroke-width="1.1"/><circle cx="6" cy="6.5" r="3.4" fill="#a8d4fc"/><circle cx="4.6" cy="4.4" r="1.9" fill="#f4faff"/><path d="M9.6 9.6 L14.6 14.6" stroke="#c83a2a" stroke-width="2.6" stroke-linecap="round"/></svg><svg style="position:absolute;left:264px;top:103px;" width="16" height="16" viewBox="0 0 16 16"><rect x="1" y="1" width="14" height="3.5" fill="#fbe6b0" stroke="#e09a30" stroke-width="1.4"/><rect x="1" y="11.5" width="14" height="3.5" fill="#fbe6b0" stroke="#e09a30" stroke-width="1.4"/><path d="M3.5 3 L12.5 3 L8 7.5 Z" fill="#22b822"/><path d="M3.5 13 L12.5 13 L8 8.5 Z" fill="#22b822"/></svg><svg style="position:absolute;left:286px;top:103px;" width="16" height="16" viewBox="0 0 16 16"><rect x="1" y="4.5" width="14" height="3" fill="#fbe6b0" stroke="#e09a30" stroke-width="1.2"/><rect x="1" y="9.5" width="14" height="3" fill="#fbe6b0" stroke="#e09a30" stroke-width="1.2"/><path d="M4 5 L12 5 L8 0.5 Z" fill="#22b822"/><path d="M4 12 L12 12 L8 16 Z" fill="#22b822"/></svg><div style="left:306px;top:100px;width:20px;height:20px;border:1px solid #d0a060;background:linear-gradient(#fcd090,#f6b060)"></div><svg style="position:absolute;left:309px;top:103px;" width="15" height="15" viewBox="0 0 15 15"><rect x="1" y="1" width="13" height="13" fill="#eef3fa" stroke="#4a70b0"/><path d="M3 10 H12 M3 12 H12" stroke="#4a70b0"/><path d="M7.5 0 V7 M5 5 L7.5 8 L10 5" fill="none" stroke="#e0a020" stroke-width="1.8"/></svg><div style="left:329px;top:105px;width:1px;height:14px;background:#c0c0c0"></div><svg style="position:absolute;left:336px;top:103px;" width="16" height="17" viewBox="0 0 16 17"><rect x="0.5" y="1" width="8" height="10" fill="#a4a4a4"/><path d="M5 4 H10 V10 H13 L8.5 15.5 L4 10 H7 Z" fill="#9a9a9a" stroke="#8a8a8a" stroke-width="0.6"/></svg><div style="left:356px;top:105px;width:1px;height:14px;background:#c0c0c0"></div><svg style="position:absolute;left:364px;top:103px;" width="14" height="16" viewBox="0 0 14 16"><path d="M1 1 L10 8 L1 15 Z" fill="#f2c030" stroke="#a08010" stroke-width="0.8"/><rect x="11" y="1" width="2.5" height="14" fill="#d0a020"/></svg><svg style="position:absolute;left:385px;top:103px;" width="16" height="16" viewBox="0 0 16 16"><path d="M1 1 L8 8 L1 15 Z" fill="#f2c030" stroke="#a08010" stroke-width="0.8"/><path d="M8 1 L15 8 L8 15 Z" fill="#f2c030" stroke="#a08010" stroke-width="0.8"/></svg><div style="left:408px;top:104px;width:13px;height:13px;background:linear-gradient(135deg,#f05050,#c01010);border:1px solid #a01010"></div><div style="left:238px;top:124px;width:334px;height:299px;box-sizing:border-box;border:1px solid #a9a9a9;"></div><div class="t" style="left:244px;top:134.00px;font-size:13px;font-family:'Liberation Sans', sans-serif;color:#000;">Name</div><div class="t" style="left:527px;top:134.00px;font-size:13px;font-family:'Liberation Sans', sans-serif;color:#000;">Status</div><div style="left:239px;top:150px;width:332px;height:1px;background:#d4d4d4"></div><div style="left:522px;top:131px;width:1px;height:20px;background:#d8d8d8"></div><svg style="position:absolute;left:241px;top:157px;" width="16" height="10" viewBox="0 0 16 10"><rect x="0.5" y="0.5" width="9" height="9" fill="#f8f8f8" stroke="#8a9aaa"/><path d="M2 5 H8" stroke="#4a5a8a" stroke-width="1.2"/><path d="M10 5 H15" stroke="#999" stroke-dasharray="1 1"/></svg><svg style="position:absolute;left:254px;top:154px;" width="10" height="16" viewBox="0 0 10 16"><rect x="2" y="1" width="6" height="14" fill="#5a78b8" stroke="#2a3a78" stroke-width="0.8"/><path d="M3 4 H7 M3 7 H7 M3 10 H7" stroke="#c8d4ee" stroke-width="0.8"/></svg><div class="t" style="left:275px;top:156.00px;font-size:13px;font-family:'Liberation Sans', sans-serif;color:#000;">localhost</div><div class="t" style="left:330px;top:156.00px;font-size:13px;font-family:'Liberation Sans', sans-serif;color:#999;">(1)</div><svg style="position:absolute;left:257px;top:173px;" width="16" height="10" viewBox="0 0 16 10"><rect x="0.5" y="0.5" width="9" height="9" fill="#f8f8f8" stroke="#8a9aaa"/><path d="M2 5 H8" stroke="#4a5a8a" stroke-width="1.2"/><path d="M10 5 H15" stroke="#999" stroke-dasharray="1 1"/></svg><svg style="position:absolute;left:273px;top:171px;" width="22" height="14" viewBox="0 0 22 14"><rect x="0.5" y="0.5" width="9" height="13" fill="#2a9a4a" stroke="#185a28"/><path d="M3 3 H7 M3 6 H7 M3 9 H7" stroke="#e04040"/><path d="M13 9 L17 4 L20 6 L16 11 Z" fill="#f0c030" stroke="#a08010" stroke-width="0.7"/></svg><div class="t" style="left:299px;top:172.00px;font-size:13px;font-family:'Liberation Sans', sans-serif;color:#000;letter-spacing:0.12px">xilinx_tcf/Digilent/210274531944A</div><div class="t" style="left:500px;top:172.00px;font-size:13px;font-family:'Liberation Sans', sans-serif;color:#999;">(1)</div><svg style="position:absolute;left:273px;top:189px;" width="16" height="10" viewBox="0 0 16 10"><rect x="0.5" y="0.5" width="9" height="9" fill="#f8f8f8" stroke="#8a9aaa"/><path d="M2 5 H8" stroke="#4a5a8a" stroke-width="1.2"/><path d="M10 5 H15" stroke="#999" stroke-dasharray="1 1"/></svg><svg style="position:absolute;left:288px;top:187px;" width="14" height="14" viewBox="0 0 14 14"><path d="M1.5 8 L7.5 2 L12.5 7 L6.5 13 Z" fill="#5078c8" stroke="#2a4a98" stroke-width="0.8"/><path d="M3.5 8 L7.5 4 L10.5 7 L6.5 11 Z" fill="#b8c8e8"/><path d="M0.5 9 L5.5 14 M8.5 1 L13.5 6" stroke="#f0d020" stroke-width="1.8" stroke-dasharray="1.2 0.8"/></svg><div class="t" style="left:306px;top:188.00px;font-size:13px;font-family:'Liberation Sans', sans-serif;color:#000;">xc7a100t_0</div><div class="t" style="left:376px;top:188.00px;font-size:13px;font-family:'Liberation Sans', sans-serif;color:#999;">(2)</div><div style="left:294px;top:202px;width:0;height:24px;border-left:1px dotted #999"></div><div style="left:295px;top:210px;width:10px;height:0;border-top:1px dotted #999"></div><svg style="position:absolute;left:304px;top:203px;" width="14" height="13" viewBox="0 0 14 13"><path d="M0 3.5 H2.5 M0 5.5 H2.5 M0 7.5 H2.5 M0 9.5 H2.5 M11.5 3.5 H14 M11.5 5.5 H14 M11.5 7.5 H14 M11.5 9.5 H14" stroke="#333" stroke-width="0.9"/><rect x="2.5" y="0.5" width="9" height="12" fill="#f4c838" stroke="#b07810" stroke-width="0.9"/><path d="M4.5 3 H9.5 M7 3 V10 M4.5 10 H9.5" stroke="#2a1a00" stroke-width="1.5"/></svg><div class="t" style="left:322px;top:204.00px;font-size:13px;font-family:'Liberation Sans', sans-serif;color:#000;">XADC</div><div class="t" style="left:361px;top:204.00px;font-size:13px;font-family:'Liberation Sans', sans-serif;color:#999;">(System Monitor)</div><div style="left:240px;top:218px;width:280px;height:14px;background:#3d9bf5;border:1px dotted #e030f0;outline:1px dotted #fff;outline-offset:-2px"></div><div style="left:524px;top:218px;width:47px;height:16px;background:#3d9bf5"></div><div style="left:295px;top:226px;width:10px;height:0;border-top:1px dotted #555"></div><svg style="position:absolute;left:304px;top:219px;" width="14" height="13" viewBox="0 0 14 13"><path d="M0 3.5 H2.5 M0 5.5 H2.5 M0 7.5 H2.5 M0 9.5 H2.5 M11.5 3.5 H14 M11.5 5.5 H14 M11.5 7.5 H14 M11.5 9.5 H14" stroke="#333" stroke-width="0.9"/><rect x="2.5" y="0.5" width="9" height="12" fill="#f4c838" stroke="#b07810" stroke-width="0.9"/><path d="M4.5 3 H9.5 M7 3 V10 M4.5 10 H9.5" stroke="#2a1a00" stroke-width="1.5"/></svg><div class="t" style="left:322px;top:220.00px;font-size:13px;font-family:'Liberation Sans', sans-serif;color:#fff;">hw_ila_1 <span style="color:#dce9fb">(ILA)</span></div><div style="left:525px;top:220px;width:12px;height:12px;border-radius:50%;background:#e4e4e4"></div><div class="t" style="left:541px;top:220.00px;font-size:13px;font-family:'Liberation Sans', sans-serif;color:#fff;">Idle</div><div class="t" style="left:525px;top:156.00px;font-size:13px;font-family:'Liberation Sans', sans-serif;color:#000;width:45px;overflow:hidden">Connect</div><div class="t" style="left:525px;top:172.00px;font-size:13px;font-family:'Liberation Sans', sans-serif;color:#000;">Open</div><div class="t" style="left:525px;top:188.00px;font-size:13px;font-family:'Liberation Sans', sans-serif;color:#000;width:45px;overflow:hidden">Program</div><div style="left:239px;top:408px;width:317px;height:14px;background:#e9eae9"></div><svg style="position:absolute;left:243px;top:411px;" width="6" height="8" viewBox="0 0 6 8"><path d="M5 0 L0.5 4 L5 8 Z" fill="#333"/></svg><svg style="position:absolute;left:546px;top:411px;" width="6" height="8" viewBox="0 0 6 8"><path d="M0.5 0 L5 4 L0.5 8 Z" fill="#333"/></svg><div style="left:255px;top:408px;width:259px;height:12px;border:1px solid #9a9a9a;border-radius:3px;background:linear-gradient(#ffffff,#f2f2f2 40%,#d0d0d0 60%,#c6c6c6)"></div><div style="left:381px;top:411px;width:1px;height:8px;background:#555"></div><div style="left:384px;top:411px;width:1px;height:8px;background:#555"></div><div style="left:387px;top:411px;width:1px;height:8px;background:#555"></div><div style="left:556px;top:408px;width:15px;height:14px;background:#f3f4f3"></div><div style="left:558px;top:410px;width:13px;height:12px;box-sizing:border-box;border:1px solid #8a8a8a;"></div><div style="left:561px;top:413px;width:7px;height:6px;box-sizing:border-box;border:1px solid #8a8a8a;"></div><div style="left:389px;top:427px;width:2px;height:2px;background:#9a9a9a"></div><div style="left:393px;top:427px;width:2px;height:2px;background:#9a9a9a"></div><div style="left:397px;top:427px;width:2px;height:2px;background:#9a9a9a"></div><div style="left:401px;top:427px;width:2px;height:2px;background:#9a9a9a"></div><div style="left:405px;top:427px;width:2px;height:2px;background:#9a9a9a"></div><div style="left:409px;top:427px;width:2px;height:2px;background:#9a9a9a"></div><div style="left:413px;top:427px;width:2px;height:2px;background:#9a9a9a"></div><div style="left:417px;top:427px;width:2px;height:2px;background:#9a9a9a"></div><div style="left:421px;top:427px;width:2px;height:2px;background:#9a9a9a"></div><div style="left:577px;top:410px;width:2px;height:2px;background:#9a9a9a"></div><div style="left:577px;top:414px;width:2px;height:2px;background:#9a9a9a"></div><div style="left:577px;top:418px;width:2px;height:2px;background:#9a9a9a"></div><div style="left:577px;top:422px;width:2px;height:2px;background:#9a9a9a"></div><div style="left:577px;top:426px;width:2px;height:2px;background:#9a9a9a"></div><div style="left:577px;top:430px;width:2px;height:2px;background:#9a9a9a"></div><div style="left:577px;top:434px;width:2px;height:2px;background:#9a9a9a"></div><div style="left:577px;top:438px;width:2px;height:2px;background:#9a9a9a"></div><div style="left:577px;top:442px;width:2px;height:2px;background:#9a9a9a"></div><div style="left:238px;top:445px;width:335px;height:8px;background:#e8e9e8"></div><div class="t" style="left:244px;top:437.00px;font-size:13px;font-family:'Liberation Sans', sans-serif;color:#000;">ILA Core Properties</div><svg style="position:absolute;left:490px;top:439px;" width="10" height="10" viewBox="0 0 10 10"><line x1="0" y1="8.5" x2="10" y2="8.5" stroke="#111" stroke-width="1.2"/></svg><svg style="position:absolute;left:509px;top:439px;" width="10" height="10" viewBox="0 0 10 10"><rect x="0.6" y="0.6" width="8.8" height="8.8" fill="none" stroke="#111" stroke-width="1.2"/></svg><svg style="position:absolute;left:529px;top:439px;" width="10" height="10" viewBox="0 0 10 10"><path d="M0.75 3 L0.75 9.25 L7 9.25" fill="none" stroke="#111" stroke-width="1.5"/><path d="M3 7 L8.5 1.5" stroke="#111" stroke-width="1.3"/><path d="M5 0.5 L9.5 0.5 L9.5 5 Z" fill="#111"/></svg><svg style="position:absolute;left:549px;top:439px;" width="10" height="10" viewBox="0 0 10 10"><path d="M1 1 L8.5 8.5 M8.5 1 L1 8.5" stroke="#111" stroke-width="1.1"/></svg><svg style="position:absolute;left:243px;top:459px;" width="16" height="14" viewBox="0 0 16 14"><path d="M0.5 7 L7 1 L7 4.5 L15 4.5 L15 9.5 L7 9.5 L7 13 Z" fill="#5a9ae6" stroke="#3a70c0" stroke-width="0.8"/></svg><svg style="position:absolute;left:265px;top:459px;" width="16" height="14" viewBox="0 0 16 14"><path d="M15.5 7 L9 1 L9 4.5 L1 4.5 L1 9.5 L9 9.5 L9 13 Z" fill="#9c9c9c"/></svg><div style="left:284px;top:455px;width:20px;height:20px;border:1px solid #c8a070;background:linear-gradient(#fcc880,#f5a850)"></div><div style="left:306px;top:455px;width:20px;height:20px;border:1px solid #c8a070;background:linear-gradient(#fcc880,#f5a850)"></div><svg style="position:absolute;left:287px;top:458px;" width="16" height="16" viewBox="0 0 16 16"><rect x="1" y="1" width="12" height="10" fill="#e8eef8" stroke="#8898b8" stroke-width="0.8"/><path d="M1 5 L5 1 L9 5 L5 9 Z" fill="#22c022"/><circle cx="10" cy="10" r="5" fill="#f0c030" stroke="#b08010" stroke-width="1.2" stroke-dasharray="1.4 0.8"/></svg><svg style="position:absolute;left:310px;top:458px;" width="14" height="16" viewBox="0 0 14 16"><path d="M2 1 L2 12 L5 9.5 L8 14.5 L10 13.5 L7.5 8.5 L11 8.5 Z" fill="#f8e080" stroke="#b89020" stroke-width="0.8"/></svg><svg style="position:absolute;left:240px;top:483px;" width="14" height="13" viewBox="0 0 14 13"><path d="M0 3.5 H2.5 M0 5.5 H2.5 M0 7.5 H2.5 M0 9.5 H2.5 M11.5 3.5 H14 M11.5 5.5 H14 M11.5 7.5 H14 M11.5 9.5 H14" stroke="#333" stroke-width="0.9"/><rect x="2.5" y="0.5" width="9" height="12" fill="#f4c838" stroke="#b07810" stroke-width="0.9"/><path d="M4.5 3 H9.5 M7 3 V10 M4.5 10 H9.5" stroke="#2a1a00" stroke-width="1.5"/></svg><svg style="position:absolute;left:254px;top:484px;" width="8" height="11" viewBox="0 0 8 11"><path d="M0.5 0.5 H7.5 L4 5.5 L7.5 10.5 H0.5 L4 5.5 Z" fill="#f0c040" stroke="#4a70b0" stroke-width="1"/></svg><div class="t" style="left:267px;top:483.00px;font-size:13px;font-family:'Liberation Sans', sans-serif;color:#000;">hw_ila_1</div><div style="left:238px;top:500px;width:333px;height:278px;box-sizing:border-box;border:1px solid #a9a9a9;"></div><div style="left:244px;top:506px;width:323px;height:246px;box-sizing:border-box;border:1px solid #b8b8b8;"></div><div class="t" style="left:250px;top:517.00px;font-size:13px;font-family:'Liberation Sans', sans-serif;color:#000;letter-spacing:0.15px">Name:</div><div class="t" style="left:393px;top:517.00px;font-size:13px;font-family:'Liberation Sans', sans-serif;color:#000;">hw_ila_1</div><div class="t" style="left:250px;top:542.00px;font-size:13px;font-family:'Liberation Sans', sans-serif;color:#000;letter-spacing:0.15px">Device:</div><div class="t" style="left:250px;top:566.00px;font-size:13px;font-family:'Liberation Sans', sans-serif;color:#000;letter-spacing:0.15px">HW core:</div><div class="t" style="left:393px;top:566.00px;font-size:13px;font-family:'Liberation Sans', sans-serif;color:#000;">core_1</div><div class="t" style="left:250px;top:588.00px;font-size:13px;font-family:'Liberation Sans', sans-serif;color:#000;letter-spacing:0.15px">Capture sample count:</div><div class="t" style="left:393px;top:588.00px;font-size:13px;font-family:'Liberation Sans', sans-serif;color:#000;">1024 of 1024</div><div class="t" style="left:250px;top:610.00px;font-size:13px;font-family:'Liberation Sans', sans-serif;color:#000;letter-spacing:0.15px">Core status:</div><div class="t" style="left:393px;top:610.00px;font-size:13px;font-family:'Liberation Sans', sans-serif;color:#000;">Full</div><div style="left:393px;top:538px;width:99px;height:20px;box-sizing:border-box;border:1px solid #888;background:#f7f8f8;"></div><svg style="position:absolute;left:398px;top:541px;" width="14" height="14" viewBox="0 0 14 14"><path d="M1.5 8 L7.5 2 L12.5 7 L6.5 13 Z" fill="#5078c8" stroke="#2a4a98" stroke-width="0.8"/><path d="M3.5 8 L7.5 4 L10.5 7 L6.5 11 Z" fill="#b8c8e8"/><path d="M0.5 9 L5.5 14 M8.5 1 L13.5 6" stroke="#f0d020" stroke-width="1.8" stroke-dasharray="1.2 0.8"/></svg><div class="t" style="left:417px;top:542.00px;font-size:13px;font-family:'Liberation Sans', sans-serif;color:#000;">xc7a100t_0</div><div style="left:244px;top:755px;width:65px;height:20px;box-sizing:border-box;border:1px solid #a9a9a9;background:#f7f8f8;"></div><div class="t" style="left:250px;top:759.15px;font-size:14px;font-family:'Liberation Sans', sans-serif;font-weight:bold;color:#000;">General</div><div class="t" style="left:314px;top:760.00px;font-size:13px;font-family:'Liberation Sans', sans-serif;color:#000;">Properties</div><div style="left:380px;top:757px;width:1px;height:16px;background:#a9a9a9"></div><div style="left:579px;top:75px;width:1337px;height:706px;box-sizing:border-box;border:1px solid #8c8c8c;"></div><div style="left:580px;top:76px;width:1335px;height:1px;background:#ffffff"></div><div style="left:580px;top:76px;width:1px;height:704px;background:#ffffff"></div><div style="left:581px;top:99px;width:1332px;height:679px;border:1px solid #b8b8b8"></div><svg style="position:absolute;left:589px;top:79px;" width="101" height="22" viewBox="0 0 101 22"><path d="M0.5 22 V2.5 L2.5 0.5 H97.5 L99.5 2.5 V22" fill="#f8b060" stroke="#a8a8a8"/><defs><linearGradient id="tabg" x1="0" y1="0" x2="0" y2="1"><stop offset="0" stop-color="#fdd896"/><stop offset="0.5" stop-color="#fbc577"/><stop offset="1" stop-color="#f8aa50"/></linearGradient></defs><path d="M1 22 V3 L3 1 H97 L99 3 V22 Z" fill="url(#tabg)"/></svg><div style="left:582px;top:100px;width:1328px;height:674px;border:2px solid #fba84a"></div><div style="left:590px;top:100px;width:99px;height:2px;background:#f9ab4e"></div><div style="left:584px;top:102px;width:1328px;height:1px;background:#ffffff"></div><div style="left:584px;top:102px;width:1px;height:674px;background:#ffffff"></div><svg style="position:absolute;left:594px;top:84px;" width="12" height="10" viewBox="0 0 12 10"><path d="M1.2 8.5 A5 5 0 1 1 10.8 8.5 Z" fill="#f2f4f6" stroke="#8a96a4" stroke-width="1.1"/><path d="M3.5 4.5 A3.2 3.2 0 0 1 8.5 4.5" fill="none" stroke="#4a7ab8" stroke-width="0.8"/><path d="M2.5 1.5 L6.5 7.5" stroke="#e02020" stroke-width="1.6"/><rect x="3" y="8.5" width="6" height="1.3" fill="#8a96a4"/></svg><div class="t" style="left:611px;top:82.15px;font-size:14px;font-family:'Liberation Sans', sans-serif;font-weight:bold;color:#000;transform:scaleX(0.855);transform-origin:0 0">hw_ila_1</div><svg style="position:absolute;left:674px;top:86px;" width="9" height="8" viewBox="0 0 9 8"><path d="M1 0.5 L8 7.5 M8 0.5 L1 7.5" stroke="#111" stroke-width="1.6"/></svg><svg style="position:absolute;left:1856px;top:84px;" width="10" height="10" viewBox="0 0 10 10"><rect x="0.6" y="0.6" width="8.8" height="8.8" fill="none" stroke="#111" stroke-width="1.2"/></svg><svg style="position:absolute;left:1876px;top:84px;" width="10" height="10" viewBox="0 0 10 10"><path d="M0.75 3 L0.75 9.25 L7 9.25" fill="none" stroke="#111" stroke-width="1.5"/><path d="M3 7 L8.5 1.5" stroke="#111" stroke-width="1.3"/><path d="M5 0.5 L9.5 0.5 L9.5 5 Z" fill="#111"/></svg><svg style="position:absolute;left:1896px;top:84px;" width="10" height="10" viewBox="0 0 10 10"><path d="M1 1 L8.5 8.5 M8.5 1 L1 8.5" stroke="#111" stroke-width="1.1"/></svg><svg style="position:absolute;left:587px;top:435px;" width="9" height="8" viewBox="0 0 9 8"><path d="M0.5 0.5 L4 4 L0.5 7.5 M4.5 0.5 L8 4 L4.5 7.5" fill="none" stroke="#111" stroke-width="1"/></svg><div style="left:598px;top:103px;width:1px;height:674px;background:#c8c8c8"></div><div style="left:600px;top:103px;width:332px;height:673px;box-sizing:border-box;border:1px solid #a0a0a0;background:#f6f8f7;"></div><div style="left:603px;top:118px;width:327px;height:8px;background:#e8e9e8"></div><div class="t" style="left:608px;top:109.00px;font-size:13px;font-family:'Liberation Sans', sans-serif;color:#000;letter-spacing:-0.37px">Settings − hw_ila_1</div><svg style="position:absolute;left:868px;top:111px;" width="10" height="10" viewBox="0 0 10 10"><line x1="0" y1="8.5" x2="10" y2="8.5" stroke="#111" stroke-width="1.2"/></svg><svg style="position:absolute;left:887px;top:111px;" width="10" height="10" viewBox="0 0 10 10"><rect x="0.6" y="0.6" width="8.8" height="8.8" fill="none" stroke="#111" stroke-width="1.2"/></svg><svg style="position:absolute;left:906px;top:111px;" width="10" height="10" viewBox="0 0 10 10"><path d="M1 1 L8.5 8.5 M8.5 1 L1 8.5" stroke="#111" stroke-width="1.1"/></svg><div style="left:603px;top:127px;width:326px;height:646px;box-sizing:border-box;border:1px solid #b4b4b4;"></div><div class="t" style="left:612px;top:139.00px;font-size:13px;font-family:'Liberation Sans', sans-serif;color:#000;">Trigger Mode Settings</div><div style="left:613px;top:154px;width:315px;height:1px;background:#c4c4c4"></div><div class="t" style="left:637px;top:166.00px;font-size:13px;font-family:'Liberation Sans', sans-serif;color:#1a5fb0;text-decoration:underline;text-underline-offset:1.5px">Trigger mode:</div><div style="left:722px;top:163px;width:116px;height:20px;box-sizing:border-box;border:1px solid #b0b0b0;background:#f7f8f8;"></div><div class="t" style="left:727px;top:166.00px;font-size:13px;font-family:'Liberation Sans', sans-serif;color:#999;">BASIC_ONLY</div><svg style="position:absolute;left:822px;top:171px;" width="9" height="5" viewBox="0 0 9 5"><path d="M0 0 L8 0 L4 4.5 Z" fill="#999"/></svg><div class="t" style="left:612px;top:219.00px;font-size:13px;font-family:'Liberation Sans', sans-serif;color:#000;">Capture Mode Settings</div><div style="left:613px;top:234px;width:315px;height:1px;background:#c4c4c4"></div><div class="t" style="left:637px;top:247.00px;font-size:13px;font-family:'Liberation Sans', sans-serif;color:#1a5fb0;text-decoration:underline;text-underline-offset:1.5px">Capture mode:</div><div style="left:798px;top:244px;width:90px;height:19px;box-sizing:border-box;border:1px solid #a0a0a0;background:#f9fafa;"></div><div class="t" style="left:803px;top:247.00px;font-size:13px;font-family:'Liberation Sans', sans-serif;color:#000;">BASIC</div><svg style="position:absolute;left:872px;top:250px;" width="9" height="5" viewBox="0 0 9 5"><path d="M0 0 L8 0 L4 4.5 Z" fill="#333"/></svg><div class="t" style="left:637px;top:274.00px;font-size:13px;font-family:'Liberation Sans', sans-serif;color:#1a5fb0;text-decoration:underline;text-underline-offset:1.5px">Number of windows:</div><div style="left:798px;top:270px;width:66px;height:21px;box-sizing:border-box;border:1px solid #a0a0a0;background:#fafbfb;"></div><div class="t" style="left:801px;top:274.00px;font-size:13px;font-family:'Liberation Sans', sans-serif;color:#000;">1</div><div class="t" style="left:871px;top:274.00px;font-size:13px;font-family:'Liberation Sans', sans-serif;color:#999;width:57px;overflow:hidden">[1 - 1024]</div><div class="t" style="left:637px;top:301.00px;font-size:13px;font-family:'Liberation Sans', sans-serif;color:#1a5fb0;text-decoration:underline;text-underline-offset:1.5px">Window data depth:</div><div style="left:798px;top:297px;width:66px;height:20px;box-sizing:border-box;border:1px solid #a0a0a0;background:#fafbfb;"></div><div class="t" style="left:801px;top:301.00px;font-size:13px;font-family:'Liberation Sans', sans-serif;color:#000;">1024</div><svg style="position:absolute;left:849px;top:303px;" width="9" height="5" viewBox="0 0 9 5"><path d="M0 0 L8 0 L4 4.5 Z" fill="#333"/></svg><div class="t" style="left:871px;top:301.00px;font-size:13px;font-family:'Liberation Sans', sans-serif;color:#999;width:57px;overflow:hidden">[1 - 1024]</div><div class="t" style="left:637px;top:328.00px;font-size:13px;font-family:'Liberation Sans', sans-serif;color:#1a5fb0;text-decoration:underline;text-underline-offset:1.5px">Trigger position in window:</div><div style="left:798px;top:324px;width:66px;height:21px;box-sizing:border-box;border:1px solid #a0a0a0;background:#fafbfb;"></div><div class="t" style="left:801px;top:328.00px;font-size:13px;font-family:'Liberation Sans', sans-serif;color:#000;">512</div><div class="t" style="left:871px;top:328.00px;font-size:13px;font-family:'Liberation Sans', sans-serif;color:#999;width:57px;overflow:hidden">[0 - 1023]</div><div class="t" style="left:612px;top:359.00px;font-size:13px;font-family:'Liberation Sans', sans-serif;color:#000;">General Settings</div><div style="left:613px;top:374px;width:315px;height:1px;background:#c4c4c4"></div><div class="t" style="left:637px;top:387.00px;font-size:13px;font-family:'Liberation Sans', sans-serif;color:#1a5fb0;text-decoration:underline;text-underline-offset:1.5px">Refresh rate:</div><div style="left:720px;top:384px;width:86px;height:21px;box-sizing:border-box;border:1px solid #a0a0a0;background:#fafbfb;"></div><div class="t" style="left:722px;top:387.00px;font-size:13px;font-family:'Liberation Sans', sans-serif;color:#000;">500</div><div class="t" style="left:812px;top:387.00px;font-size:13px;font-family:'Liberation Sans', sans-serif;color:#000;">ms</div><div style="left:604px;top:758px;width:310px;height:14px;background:#e9eae9"></div><svg style="position:absolute;left:608px;top:761px;" width="6" height="8" viewBox="0 0 6 8"><path d="M5 0 L0.5 4 L5 8 Z" fill="#333"/></svg><svg style="position:absolute;left:904px;top:761px;" width="6" height="8" viewBox="0 0 6 8"><path d="M0.5 0 L5 4 L0.5 8 Z" fill="#333"/></svg><div style="left:620px;top:758px;width:246px;height:12px;border:1px solid #9a9a9a;border-radius:3px;background:linear-gradient(#ffffff,#f2f2f2 40%,#d0d0d0 60%,#c6c6c6)"></div><div style="left:740px;top:761px;width:1px;height:8px;background:#555"></div><div style="left:743px;top:761px;width:1px;height:8px;background:#555"></div><div style="left:746px;top:761px;width:1px;height:8px;background:#555"></div><div style="left:914px;top:758px;width:14px;height:14px;background:#f3f4f3"></div><div style="left:915px;top:759px;width:13px;height:13px;box-sizing:border-box;border:1px solid #8a8a8a;"></div><div style="left:918px;top:762px;width:7px;height:7px;box-sizing:border-box;border:1px solid #8a8a8a;"></div><div style="left:936px;top:103px;width:976px;height:177px;box-sizing:border-box;border:1px solid #a0a0a0;background:#f6f8f7;"></div><div style="left:938px;top:118px;width:972px;height:9px;background:#e8e9e8"></div><div class="t" style="left:944px;top:110.00px;font-size:13px;font-family:'Liberation Sans', sans-serif;color:#000;letter-spacing:-0.35px">Status − hw_ila_1</div><svg style="position:absolute;left:1846px;top:111px;" width="10" height="10" viewBox="0 0 10 10"><line x1="0" y1="8.5" x2="10" y2="8.5" stroke="#111" stroke-width="1.2"/></svg><svg style="position:absolute;left:1865px;top:111px;" width="10" height="10" viewBox="0 0 10 10"><rect x="0.6" y="0.6" width="8.8" height="8.8" fill="none" stroke="#111" stroke-width="1.2"/></svg><svg style="position:absolute;left:1885px;top:111px;" width="10" height="10" viewBox="0 0 10 10"><path d="M1 1 L8.5 8.5 M8.5 1 L1 8.5" stroke="#111" stroke-width="1.1"/></svg><svg style="position:absolute;left:944px;top:131px;" width="16" height="17" viewBox="0 0 16 17"><path d="M3 9 A5.5 5.5 0 1 0 8 4" fill="none" stroke="#2aa82a" stroke-width="1.5"/><path d="M1 6 L6 3 L5 9 Z" fill="#2aa82a"/><path d="M7 1 L14 6 L7 11 Z" fill="#f2c030" stroke="#a08010" stroke-width="0.7"/></svg><svg style="position:absolute;left:945px;top:153px;" width="14" height="16" viewBox="0 0 14 16"><path d="M1 1 L10 8 L1 15 Z" fill="#f2c030" stroke="#a08010" stroke-width="0.8"/><rect x="11" y="1" width="2.5" height="14" fill="#d0a020"/></svg><svg style="position:absolute;left:944px;top:175px;" width="16" height="16" viewBox="0 0 16 16"><path d="M1 1 L8 8 L1 15 Z" fill="#f2c030" stroke="#a08010" stroke-width="0.8"/><path d="M8 1 L15 8 L8 15 Z" fill="#f2c030" stroke="#a08010" stroke-width="0.8"/></svg><div style="left:945px;top:198px;width:12px;height:12px;background:linear-gradient(135deg,#f46060,#d02020);border:1px solid #a01010"></div><svg style="position:absolute;left:944px;top:219px;" width="16" height="16" viewBox="0 0 16 16"><rect x="1" y="1" width="5" height="5" fill="#9a9a9a"/><rect x="9" y="5" width="5" height="5" fill="#9a9a9a"/><path d="M3.5 6 V12 M1 10 L3.5 14 L6 10 M11.5 10 Q11.5 14 7 14" fill="none" stroke="#9a9a9a" stroke-width="1.4"/></svg><div class="t" style="left:971px;top:139.00px;font-size:13px;font-family:'Liberation Sans', sans-serif;color:#000;">Core status</div><div style="left:972px;top:153px;width:629px;height:1px;background:#c4c4c4"></div><div style="left:993px;top:159px;width:605px;height:20px;box-sizing:border-box;border:1px solid #c0c0c0;"></div><div style="left:994px;top:160px;width:120px;height:18px;background:#72e272"></div><div style="left:1114px;top:160px;width:1px;height:18px;background:#c0c0c0"></div><div style="left:1234px;top:160px;width:1px;height:18px;background:#c0c0c0"></div><div style="left:1355px;top:160px;width:1px;height:18px;background:#c0c0c0"></div><div style="left:1476px;top:160px;width:1px;height:18px;background:#c0c0c0"></div><div class="t" style="left:994px;top:163.00px;width:120px;text-align:center;font-size:13px">Idle</div><div class="t" style="left:1114px;top:163.00px;width:120px;text-align:center;font-size:13px">Pre-Trigger</div><div class="t" style="left:1234px;top:163.00px;width:121px;text-align:center;font-size:13px">Waiting for Trigger</div><div class="t" style="left:1355px;top:163.00px;width:121px;text-align:center;font-size:13px">Post-Trigger</div><div class="t" style="left:1476px;top:163.00px;width:121px;text-align:center;font-size:13px">Full</div><div class="t" style="left:971px;top:191.00px;font-size:13px;font-family:'Liberation Sans', sans-serif;color:#000;">Capture status</div><div style="left:972px;top:205px;width:629px;height:1px;background:#c4c4c4"></div><div class="t" style="left:993px;top:212.00px;font-size:13px;font-family:'Liberation Sans', sans-serif;color:#000;">Window 1  of 1</div><div class="t" style="left:1129px;top:212.00px;font-size:13px;font-family:'Liberation Sans', sans-serif;color:#000;letter-spacing:-0.2px">Window sample 0 of 1024</div><div class="t" style="left:1295px;top:212.00px;font-size:13px;font-family:'Liberation Sans', sans-serif;color:#000;letter-spacing:0.2px">Total sample 0 of 1024</div><div style="left:993px;top:227px;width:121px;height:20px;box-sizing:border-box;border:1px solid #c0c0c0;"></div><div style="left:1129px;top:227px;width:151px;height:20px;box-sizing:border-box;border:1px solid #c0c0c0;"></div><div style="left:1295px;top:227px;width:138px;height:20px;box-sizing:border-box;border:1px solid #c0c0c0;"></div><div class="t" style="left:993px;top:231.00px;width:121px;text-align:center;font-size:13px">Idle</div><div class="t" style="left:1129px;top:231.00px;width:151px;text-align:center;font-size:13px">Idle</div><div class="t" style="left:1295px;top:231.00px;width:138px;text-align:center;font-size:13px">Idle</div><div style="left:1405px;top:281px;width:2px;height:2px;background:#9a9a9a"></div><div style="left:1409px;top:281px;width:2px;height:2px;background:#9a9a9a"></div><div style="left:1413px;top:281px;width:2px;height:2px;background:#9a9a9a"></div><div style="left:1417px;top:281px;width:2px;height:2px;background:#9a9a9a"></div><div style="left:1421px;top:281px;width:2px;height:2px;background:#9a9a9a"></div><div style="left:1425px;top:281px;width:2px;height:2px;background:#9a9a9a"></div><div style="left:1429px;top:281px;width:2px;height:2px;background:#9a9a9a"></div><div style="left:1433px;top:281px;width:2px;height:2px;background:#9a9a9a"></div><div style="left:1437px;top:281px;width:2px;height:2px;background:#9a9a9a"></div><div style="left:936px;top:284px;width:499px;height:175px;box-sizing:border-box;border:1px solid #a0a0a0;background:#f6f8f7;"></div><div style="left:938px;top:299px;width:495px;height:8px;background:#e8e9e8"></div><div class="t" style="left:945px;top:291.00px;font-size:13px;font-family:'Liberation Sans', sans-serif;color:#000;letter-spacing:-0.27px">Trigger Setup − hw_ila_1</div><svg style="position:absolute;left:1370px;top:292px;" width="10" height="10" viewBox="0 0 10 10"><line x1="0" y1="8.5" x2="10" y2="8.5" stroke="#111" stroke-width="1.2"/></svg><svg style="position:absolute;left:1389px;top:292px;" width="10" height="10" viewBox="0 0 10 10"><rect x="0.6" y="0.6" width="8.8" height="8.8" fill="none" stroke="#111" stroke-width="1.2"/></svg><svg style="position:absolute;left:1409px;top:292px;" width="10" height="10" viewBox="0 0 10 10"><path d="M1 1 L8.5 8.5 M8.5 1 L1 8.5" stroke="#111" stroke-width="1.1"/></svg><div style="left:963px;top:308px;width:1px;height:148px;background:#d0d0d0"></div><svg style="position:absolute;left:944px;top:312px;" width="16" height="16" viewBox="0 0 16 16"><circle cx="6" cy="6" r="4.8" fill="#7ab8f4" stroke="#2a64b8" stroke-width="1.1"/><circle cx="6" cy="6.5" r="3.4" fill="#a8d4fc"/><circle cx="4.6" cy="4.4" r="1.9" fill="#f4faff"/><path d="M9.6 9.6 L14.6 14.6" stroke="#c83a2a" stroke-width="2.6" stroke-linecap="round"/></svg><svg style="position:absolute;left:944px;top:334px;" width="14" height="14" viewBox="0 0 14 14"><path d="M7.0 1 V13 M1 7.0 H13" stroke="#1ea01e" stroke-width="3.4"/></svg><div style="left:945px;top:363px;width:14px;height:4px;background:#9a9a9a"></div><div style="left:946px;top:376px;width:14px;height:1px;background:#b0b0b0"></div><svg style="position:absolute;left:943px;top:384px;" width="18" height="17" viewBox="0 0 18 17"><path d="M4.5 2 Q8 8.5 4.5 15 H8.5 Q13.5 14 16 8.5 Q13.5 3 8.5 2 Z" fill="#f0f0f0" stroke="#808890" stroke-width="1.7"/><path d="M0.5 5.5 H6 M0.5 11.5 H6 M15.5 8.5 H17.5" stroke="#808890" stroke-width="1.6"/><path d="M17.5 12 L17.5 17 L12.5 17 Z" fill="#333"/></svg><div class="t" style="left:969px;top:317.00px;font-size:13px;font-family:'Liberation Sans', sans-serif;color:#000;">Name</div><div class="t" style="left:1076px;top:317.00px;font-size:13px;font-family:'Liberation Sans', sans-serif;color:#000;">Compare Value</div><div style="left:964px;top:334px;width:227px;height:1px;background:#d8d8d8"></div><div style="left:1070px;top:315px;width:1px;height:20px;background:#d8d8d8"></div><div style="left:1190px;top:315px;width:1px;height:20px;background:#e0e0e0"></div><svg style="position:absolute;left:966px;top:340px;" width="14" height="10" viewBox="0 0 14 10"><path d="M1 1 Q2 7 6 6" fill="none" stroke="#2a9a2a" stroke-width="1.3"/><ellipse cx="9.5" cy="6" rx="3.5" ry="2.5" fill="#9ae070" stroke="#2a9a2a" stroke-width="0.8"/></svg><div class="t" style="left:982px;top:338.00px;font-size:13px;font-family:'Liberation Sans', sans-serif;color:#000;letter-spacing:-0.2px">BTNC_reg</div><svg style="position:absolute;left:966px;top:354px;" width="14" height="13" viewBox="0 0 14 13"><path d="M1 1 Q2 5 5 4 M1 4 Q2 9 5 8" fill="none" stroke="#2a9a2a" stroke-width="1.1"/><ellipse cx="9" cy="5" rx="4" ry="2.5" fill="#9ae070" stroke="#2a9a2a" stroke-width="0.8"/><ellipse cx="9" cy="9" rx="4" ry="2.5" fill="#9ae070" stroke="#2a9a2a" stroke-width="0.8"/></svg><div class="t" style="left:982px;top:354.00px;font-size:13px;font-family:'Liberation Sans', sans-serif;color:#000;letter-spacing:0.25px">uartrxdata[7:0]</div><div class="t" style="left:1075px;top:341.10px;font-size:9px;font-family:'Liberation Mono', monospace;color:#000;white-space:pre;font-weight:600">==  [B]  R</div><div class="t" style="left:1075px;top:357.10px;font-size:9px;font-family:'Liberation Mono', monospace;color:#000;white-space:pre;font-weight:600">==  [H]  40</div><svg style="position:absolute;left:1179px;top:342px;" width="8" height="5" viewBox="0 0 8 5"><path d="M0 0 L7 0 L3.5 4 Z" fill="#333"/></svg><svg style="position:absolute;left:1179px;top:358px;" width="8" height="5" viewBox="0 0 8 5"><path d="M0 0 L7 0 L3.5 4 Z" fill="#333"/></svg><div style="left:933px;top:421px;width:2px;height:2px;background:#9a9a9a"></div><div style="left:933px;top:425px;width:2px;height:2px;background:#9a9a9a"></div><div style="left:933px;top:429px;width:2px;height:2px;background:#9a9a9a"></div><div style="left:933px;top:433px;width:2px;height:2px;background:#9a9a9a"></div><div style="left:933px;top:437px;width:2px;height:2px;background:#9a9a9a"></div><div style="left:933px;top:441px;width:2px;height:2px;background:#9a9a9a"></div><div style="left:933px;top:445px;width:2px;height:2px;background:#9a9a9a"></div><div style="left:933px;top:449px;width:2px;height:2px;background:#9a9a9a"></div><div style="left:933px;top:453px;width:2px;height:2px;background:#9a9a9a"></div><div style="left:1405px;top:461px;width:2px;height:2px;background:#9a9a9a"></div><div style="left:1409px;top:461px;width:2px;height:2px;background:#9a9a9a"></div><div style="left:1413px;top:461px;width:2px;height:2px;background:#9a9a9a"></div><div style="left:1417px;top:461px;width:2px;height:2px;background:#9a9a9a"></div><div style="left:1421px;top:461px;width:2px;height:2px;background:#9a9a9a"></div><div style="left:1425px;top:461px;width:2px;height:2px;background:#9a9a9a"></div><div style="left:1429px;top:461px;width:2px;height:2px;background:#9a9a9a"></div><div style="left:1433px;top:461px;width:2px;height:2px;background:#9a9a9a"></div><div style="left:1437px;top:461px;width:2px;height:2px;background:#9a9a9a"></div><div style="left:1435px;top:352px;width:2px;height:2px;background:#9a9a9a"></div><div style="left:1435px;top:356px;width:2px;height:2px;background:#9a9a9a"></div><div style="left:1435px;top:360px;width:2px;height:2px;background:#9a9a9a"></div><div style="left:1435px;top:364px;width:2px;height:2px;background:#9a9a9a"></div><div style="left:1435px;top:368px;width:2px;height:2px;background:#9a9a9a"></div><div style="left:1435px;top:372px;width:2px;height:2px;background:#9a9a9a"></div><div style="left:1435px;top:376px;width:2px;height:2px;background:#9a9a9a"></div><div style="left:1435px;top:380px;width:2px;height:2px;background:#9a9a9a"></div><div style="left:1435px;top:384px;width:2px;height:2px;background:#9a9a9a"></div><div style="left:1439px;top:284px;width:472px;height:175px;box-sizing:border-box;border:1px solid #a0a0a0;background:#f6f8f7;"></div><div style="left:1441px;top:299px;width:468px;height:8px;background:#e8e9e8"></div><div class="t" style="left:1447px;top:291.00px;font-size:13px;font-family:'Liberation Sans', sans-serif;color:#000;letter-spacing:-0.2px">Capture Setup − hw_ila_1</div><svg style="position:absolute;left:1846px;top:292px;" width="10" height="10" viewBox="0 0 10 10"><line x1="0" y1="8.5" x2="10" y2="8.5" stroke="#111" stroke-width="1.2"/></svg><svg style="position:absolute;left:1865px;top:292px;" width="10" height="10" viewBox="0 0 10 10"><rect x="0.6" y="0.6" width="8.8" height="8.8" fill="none" stroke="#111" stroke-width="1.2"/></svg><svg style="position:absolute;left:1885px;top:292px;" width="10" height="10" viewBox="0 0 10 10"><path d="M1 1 L8.5 8.5 M8.5 1 L1 8.5" stroke="#111" stroke-width="1.1"/></svg><div style="left:1466px;top:308px;width:442px;height:148px;box-sizing:border-box;border:1px solid #b4b4b4;"></div><svg style="position:absolute;left:1447px;top:312px;" width="16" height="16" viewBox="0 0 16 16"><circle cx="6" cy="6" r="4.6" fill="#c8c8c8" stroke="#8a8a8a" stroke-width="1.4"/><circle cx="4.8" cy="4.6" r="1.8" fill="#e8e8e8"/><path d="M9.5 9.5 L14.5 14.5" stroke="#8a8a8a" stroke-width="2.6"/></svg><svg style="position:absolute;left:1448px;top:334px;" width="14" height="14" viewBox="0 0 14 14"><path d="M7.0 1 V13 M1 7.0 H13" stroke="#1ea01e" stroke-width="3.4"/></svg><div style="left:1448px;top:363px;width:14px;height:4px;background:#9a9a9a"></div><div style="left:1449px;top:376px;width:14px;height:1px;background:#b0b0b0"></div><svg style="position:absolute;left:1446px;top:384px;" width="18" height="17" viewBox="0 0 18 17"><path d="M4.5 2 Q8 8.5 4.5 15 H8.5 Q13.5 14 16 8.5 Q13.5 3 8.5 2 Z" fill="#f0f0f0" stroke="#808890" stroke-width="1.7"/><path d="M0.5 5.5 H6 M0.5 11.5 H6 M15.5 8.5 H17.5" stroke="#808890" stroke-width="1.6"/><path d="M17.5 12 L17.5 17 L12.5 17 Z" fill="#333"/></svg><div class="t" style="left:1578px;top:376.00px;font-size:13px;font-family:'Liberation Sans', sans-serif;color:#999;">Press the</div><svg style="position:absolute;left:1643px;top:375px;" width="14" height="14" viewBox="0 0 14 14"><path d="M7.0 1 V13 M1 7.0 H13" stroke="#1ea01e" stroke-width="3.4"/></svg><div class="t" style="left:1667px;top:376.00px;font-size:13px;font-family:'Liberation Sans', sans-serif;color:#999;">button to add probes.</div><div style="left:936px;top:463px;width:976px;height:314px;box-sizing:border-box;border:1px solid #a8a8a8;"></div><div style="left:937px;top:464px;width:970px;height:308px;border:2px solid #fba84a"></div><div style="left:939px;top:466px;width:970px;height:21px;background:linear-gradient(#fdd79c,#fbc47c 55%,#f9b468)"></div><div class="t" style="left:945px;top:469.00px;font-size:13px;font-family:'Liberation Sans', sans-serif;color:#000;letter-spacing:-0.45px">Waveform − hw_ila_1</div><svg style="position:absolute;left:1846px;top:471px;" width="10" height="10" viewBox="0 0 10 10"><line x1="0" y1="8.5" x2="10" y2="8.5" stroke="#111" stroke-width="1.2"/></svg><svg style="position:absolute;left:1865px;top:471px;" width="10" height="10" viewBox="0 0 10 10"><rect x="0.6" y="0.6" width="8.8" height="8.8" fill="none" stroke="#111" stroke-width="1.2"/></svg><svg style="position:absolute;left:1885px;top:471px;" width="10" height="10" viewBox="0 0 10 10"><path d="M1 1 L8.5 8.5 M8.5 1 L1 8.5" stroke="#111" stroke-width="1.1"/></svg><div style="left:938px;top:487px;width:25px;height:286px;background:#f5f7f6"></div><svg style="position:absolute;left:943px;top:490px;" width="16" height="16" viewBox="0 0 16 16"><path d="M1 8 H8 M5 5 L8 8 L5 11" fill="none" stroke="#3a6ab8" stroke-width="1.5"/><rect x="10" y="1.5" width="4" height="13" fill="#dbe8f8" stroke="#3a6ab8"/><path d="M1 1 V15" stroke="#aaa" stroke-dasharray="1 1"/></svg><svg style="position:absolute;left:944px;top:515px;" width="14" height="14" viewBox="0 0 14 14"><path d="M7 1 V13 M1 7 H13" stroke="#1ea01e" stroke-width="3.4"/></svg><div style="left:945px;top:543px;width:14px;height:4px;background:#b85a3a"></div><svg style="position:absolute;left:943px;top:558px;" width="17" height="17" viewBox="0 0 17 17"><circle cx="6.5" cy="7.5" r="4.3" fill="#cfe6ff" stroke="#3a7ad0" stroke-width="1.5"/><path d="M9.5 10.5 L14 15" stroke="#c83a2a" stroke-width="2.4"/><path d="M12 1 V6 M9.5 3.5 H14.5" stroke="#333" stroke-width="1"/></svg><svg style="position:absolute;left:943px;top:580px;" width="17" height="17" viewBox="0 0 17 17"><circle cx="6.5" cy="7.5" r="4.3" fill="#cfe6ff" stroke="#3a7ad0" stroke-width="1.5"/><path d="M9.5 10.5 L14 15" stroke="#c83a2a" stroke-width="2.4"/><path d="M9.5 3.5 H14.5" stroke="#333" stroke-width="1"/></svg><svg style="position:absolute;left:943px;top:602px;" width="17" height="17" viewBox="0 0 17 17"><circle cx="6.5" cy="7.5" r="4.3" fill="#cfe6ff" stroke="#3a7ad0" stroke-width="1.5"/><path d="M9.5 10.5 L14 15" stroke="#c83a2a" stroke-width="2.4"/><rect x="0.5" y="0.5" width="15" height="15" fill="none" stroke="#777" stroke-dasharray="1.5 1.5"/></svg><svg style="position:absolute;left:944px;top:624px;" width="16" height="17" viewBox="0 0 16 17"><path d="M7 0 V17" stroke="#e0c020" stroke-width="2"/><circle cx="6" cy="10" r="3.5" fill="#cfe6ff" stroke="#3a7ad0" stroke-width="1.3"/><path d="M8.5 12.5 L12 16" stroke="#c83a2a" stroke-width="2"/></svg><svg style="position:absolute;left:945px;top:647px;" width="14" height="16" viewBox="0 0 14 16"><rect x="1" y="1" width="2" height="14" fill="#3a6ab8"/><path d="M13 1 L4.5 8 L13 15 Z" fill="#c8dcf6" stroke="#3a6ab8"/></svg><svg style="position:absolute;left:945px;top:669px;" width="14" height="16" viewBox="0 0 14 16"><rect x="11" y="1" width="2" height="14" fill="#3a6ab8"/><path d="M1 1 L9.5 8 L1 15 Z" fill="#c8dcf6" stroke="#3a6ab8"/></svg><svg style="position:absolute;left:943px;top:691px;" width="18" height="17" viewBox="0 0 18 17"><path d="M1 15 H5 V5 H9" fill="none" stroke="#22a022" stroke-width="2"/><path d="M9 5 L13 1 V3.5 H17 V6.5 H13 V9 Z" fill="#f2d040" stroke="#a08010" stroke-width="0.7"/></svg><svg style="position:absolute;left:943px;top:713px;" width="18" height="17" viewBox="0 0 18 17"><path d="M3 15 H13 V9 H17" fill="none" stroke="#22a022" stroke-width="2"/><path d="M12 5 L8 1 V3.5 H3 V6.5 H8 V9 Z" fill="#f2d040" stroke="#a08010" stroke-width="0.7"/></svg><svg style="position:absolute;left:943px;top:735px;" width="18" height="17" viewBox="0 0 18 17"><path d="M6 16 V6 H12 V1 H16" fill="none" stroke="#3a8ac8" stroke-width="2"/><path d="M5 4 V13 M1 8.5 H10" stroke="#1ea01e" stroke-width="2.6"/></svg><div style="left:938px;top:756px;width:25px;height:17px;background:#c4c4c4"></div><svg style="position:absolute;left:945px;top:760px;" width="9" height="9" viewBox="0 0 9 9"><path d="M1 1 L4.5 4 L8 1 M1 5 L4.5 8 L8 5" fill="none" stroke="#333" stroke-width="1.1"/></svg><div style="left:963px;top:487px;width:930px;height:286px;background:#060606"></div><div style="left:963px;top:513px;width:175px;height:24px;background:linear-gradient(#f4f4f4,#e2e2e2);border-right:1px solid #c8c8c8"></div><div style="left:1140px;top:513px;width:148px;height:24px;background:linear-gradient(#f4f4f4,#e2e2e2)"></div><div class="t" style="left:975px;top:518.00px;font-size:13px;font-family:'Liberation Sans', sans-serif;color:#222;">Name</div><div class="t" style="left:1152px;top:518.00px;font-size:13px;font-family:'Liberation Sans', sans-serif;color:#222;">Value</div><div style="left:1138px;top:513px;width:2px;height:260px;background:#e8e8e8"></div><div style="left:1289px;top:487px;width:2px;height:286px;background:#e8e8e8"></div><div style="left:963px;top:717px;width:326px;height:1px;background:#e0e0e0"></div><svg style="position:absolute;left:965px;top:549px;" width="13" height="12" viewBox="0 0 13 12"><rect x="0.5" y="0.5" width="11" height="11" fill="#f0f0f0" stroke="#b8b8b8"/><path d="M2.5 6 H9.5 M6 2.5 V9.5" stroke="#2a4a8a" stroke-width="1.2"/></svg><svg style="position:absolute;left:977px;top:549px;" width="18" height="13" viewBox="0 0 18 13"><path d="M0.5 6 H5" stroke="#aaa" stroke-dasharray="1 1"/><defs><linearGradient id="bg0" x1="0" y1="0" x2="1" y2="1"><stop offset="0" stop-color="#9ad0ff"/><stop offset="1" stop-color="#1a70d0"/></linearGradient></defs><path d="M5 1 L10 4.5 L16.5 0.5 V11.5 L10 8 L5 11.5 Z" fill="url(#bg0)"/><circle cx="13.5" cy="9" r="3.3" fill="#9a9a9a" stroke="#555" stroke-width="1" stroke-dasharray="1 0.7"/><circle cx="13.5" cy="9" r="1" fill="#111"/></svg><div class="t" style="left:998px;top:549.00px;font-size:13px;font-family:'Liberation Sans', sans-serif;color:#f0f0f0;letter-spacing:0.25px">counter[31:0]</div><div class="t" style="left:1144px;top:549.00px;font-size:13px;font-family:'Liberation Sans', sans-serif;color:#f0f0f0;">0d9f3a0e</div><svg style="position:absolute;left:965px;top:569px;" width="13" height="12" viewBox="0 0 13 12"><rect x="0.5" y="0.5" width="11" height="11" fill="#f0f0f0" stroke="#b8b8b8"/><path d="M2.5 6 H9.5 M6 2.5 V9.5" stroke="#2a4a8a" stroke-width="1.2"/></svg><svg style="position:absolute;left:977px;top:569px;" width="18" height="13" viewBox="0 0 18 13"><path d="M0.5 6 H5" stroke="#aaa" stroke-dasharray="1 1"/><defs><linearGradient id="bg1" x1="0" y1="0" x2="1" y2="1"><stop offset="0" stop-color="#9ad0ff"/><stop offset="1" stop-color="#1a70d0"/></linearGradient></defs><path d="M5 1 L10 4.5 L16.5 0.5 V11.5 L10 8 L5 11.5 Z" fill="url(#bg1)"/><circle cx="13.5" cy="9" r="3.3" fill="#9a9a9a" stroke="#555" stroke-width="1" stroke-dasharray="1 0.7"/><circle cx="13.5" cy="9" r="1" fill="#111"/></svg><div class="t" style="left:998px;top:569.00px;font-size:13px;font-family:'Liberation Sans', sans-serif;color:#f0f0f0;letter-spacing:0.25px">uarttxdata[7:0]</div><div class="t" style="left:1144px;top:569.00px;font-size:13px;font-family:'Liberation Sans', sans-serif;color:#f0f0f0;">43</div><svg style="position:absolute;left:965px;top:589px;" width="13" height="12" viewBox="0 0 13 12"><rect x="0.5" y="0.5" width="11" height="11" fill="#f0f0f0" stroke="#b8b8b8"/><path d="M2.5 6 H9.5 M6 2.5 V9.5" stroke="#2a4a8a" stroke-width="1.2"/></svg><svg style="position:absolute;left:977px;top:589px;" width="18" height="13" viewBox="0 0 18 13"><path d="M0.5 6 H5" stroke="#aaa" stroke-dasharray="1 1"/><defs><linearGradient id="bg2" x1="0" y1="0" x2="1" y2="1"><stop offset="0" stop-color="#9ad0ff"/><stop offset="1" stop-color="#1a70d0"/></linearGradient></defs><path d="M5 1 L10 4.5 L16.5 0.5 V11.5 L10 8 L5 11.5 Z" fill="url(#bg2)"/><circle cx="13.5" cy="9" r="3.3" fill="#9a9a9a" stroke="#555" stroke-width="1" stroke-dasharray="1 0.7"/><circle cx="13.5" cy="9" r="1" fill="#111"/></svg><div class="t" style="left:998px;top:589.00px;font-size:13px;font-family:'Liberation Sans', sans-serif;color:#f0f0f0;letter-spacing:0.25px">uartrxdata[7:0]</div><div class="t" style="left:1144px;top:589.00px;font-size:13px;font-family:'Liberation Sans', sans-serif;color:#f0f0f0;">40</div><svg style="position:absolute;left:982px;top:608px;" width="13" height="14" viewBox="0 0 13 14"><path d="M0.5 1.5 H3 V9.5 H6.5 V1.5 H9 V8" fill="none" stroke="#6a9a4a" stroke-width="1"/><circle cx="9.5" cy="10" r="3.3" fill="#9a9a9a" stroke="#555" stroke-width="1" stroke-dasharray="1 0.7"/><circle cx="9.5" cy="10" r="1" fill="#111"/></svg><div style="left:997px;top:606px;width:93px;height:17px;background:#3d9bf5;border:1px dotted #d08030"></div><div style="left:1144px;top:606px;width:138px;height:17px;background:#3d9bf5;border:1px dotted #d08030"></div><div class="t" style="left:998px;top:609.00px;font-size:13px;font-family:'Liberation Sans', sans-serif;color:#f0f0f0;letter-spacing:0.1px">BTNC_reg</div><div class="t" style="left:1144px;top:609.00px;font-size:13px;font-family:'Liberation Sans', sans-serif;color:#f0f0f0;">0</div><svg style="position:absolute;left:982px;top:628px;" width="13" height="14" viewBox="0 0 13 14"><path d="M0.5 1.5 H3 V9.5 H6.5 V1.5 H9 V8" fill="none" stroke="#6a9a4a" stroke-width="1"/><circle cx="9.5" cy="10" r="3.3" fill="#9a9a9a" stroke="#555" stroke-width="1" stroke-dasharray="1 0.7"/><circle cx="9.5" cy="10" r="1" fill="#111"/></svg><div class="t" style="left:998px;top:629.00px;font-size:13px;font-family:'Liberation Sans', sans-serif;color:#f0f0f0;letter-spacing:0.1px">uartrxvalid</div><div class="t" style="left:1144px;top:629.00px;font-size:13px;font-family:'Liberation Sans', sans-serif;color:#f0f0f0;">1</div><svg style="position:absolute;left:982px;top:648px;" width="13" height="14" viewBox="0 0 13 14"><path d="M0.5 1.5 H3 V9.5 H6.5 V1.5 H9 V8" fill="none" stroke="#6a9a4a" stroke-width="1"/><circle cx="9.5" cy="10" r="3.3" fill="#9a9a9a" stroke="#555" stroke-width="1" stroke-dasharray="1 0.7"/><circle cx="9.5" cy="10" r="1" fill="#111"/></svg><div class="t" style="left:998px;top:649.00px;font-size:13px;font-family:'Liberation Sans', sans-serif;color:#f0f0f0;letter-spacing:0.1px">uartrxwait</div><div class="t" style="left:1144px;top:649.00px;font-size:13px;font-family:'Liberation Sans', sans-serif;color:#f0f0f0;">1</div><svg style="position:absolute;left:982px;top:668px;" width="13" height="14" viewBox="0 0 13 14"><path d="M0.5 1.5 H3 V9.5 H6.5 V1.5 H9 V8" fill="none" stroke="#6a9a4a" stroke-width="1"/><circle cx="9.5" cy="10" r="3.3" fill="#9a9a9a" stroke="#555" stroke-width="1" stroke-dasharray="1 0.7"/><circle cx="9.5" cy="10" r="1" fill="#111"/></svg><div class="t" style="left:998px;top:669.00px;font-size:13px;font-family:'Liberation Sans', sans-serif;color:#f0f0f0;letter-spacing:0.1px">uarttxvalid</div><div class="t" style="left:1144px;top:669.00px;font-size:13px;font-family:'Liberation Sans', sans-serif;color:#f0f0f0;">0</div><svg style="position:absolute;left:982px;top:688px;" width="13" height="14" viewBox="0 0 13 14"><path d="M0.5 1.5 H3 V9.5 H6.5 V1.5 H9 V8" fill="none" stroke="#6a9a4a" stroke-width="1"/><circle cx="9.5" cy="10" r="3.3" fill="#9a9a9a" stroke="#555" stroke-width="1" stroke-dasharray="1 0.7"/><circle cx="9.5" cy="10" r="1" fill="#111"/></svg><div class="t" style="left:998px;top:689.00px;font-size:13px;font-family:'Liberation Sans', sans-serif;color:#f0f0f0;letter-spacing:0.1px">uarttxwait</div><div class="t" style="left:1144px;top:689.00px;font-size:13px;font-family:'Liberation Sans', sans-serif;color:#f0f0f0;">0</div><div style="left:1141px;top:758px;width:148px;height:15px;background:#e9eae9"></div><svg style="position:absolute;left:1145px;top:761px;" width="6" height="8" viewBox="0 0 6 8"><path d="M5 0 L0.5 4 L5 8 Z" fill="#333"/></svg><svg style="position:absolute;left:1277px;top:761px;" width="6" height="8" viewBox="0 0 6 8"><path d="M0.5 0 L5 4 L0.5 8 Z" fill="#333"/></svg><svg style="position:absolute;left:1292px;top:487px" width="601" height="271"><line x1="60.5" y1="39" x2="60.5" y2="231" stroke="#9a9a9a" stroke-width="1"/><text x="62.0" y="47.5" font-family="Liberation Sans" font-size="10.5" fill="#e8e8e8">500</text><line x1="160.5" y1="39" x2="160.5" y2="231" stroke="#9a9a9a" stroke-width="1"/><text x="162.0" y="47.5" font-family="Liberation Sans" font-size="10.5" fill="#e8e8e8">505</text><line x1="260.5" y1="39" x2="260.5" y2="231" stroke="#9a9a9a" stroke-width="1"/><text x="262.0" y="47.5" font-family="Liberation Sans" font-size="10.5" fill="#e8e8e8">510</text><line x1="360.5" y1="39" x2="360.5" y2="231" stroke="#9a9a9a" stroke-width="1"/><text x="362.0" y="47.5" font-family="Liberation Sans" font-size="10.5" fill="#e8e8e8">515</text><line x1="460.5" y1="39" x2="460.5" y2="231" stroke="#9a9a9a" stroke-width="1"/><text x="462.0" y="47.5" font-family="Liberation Sans" font-size="10.5" fill="#e8e8e8">520</text><line x1="560.5" y1="39" x2="560.5" y2="231" stroke="#9a9a9a" stroke-width="1"/><text x="562.0" y="47.5" font-family="Liberation Sans" font-size="10.5" fill="#e8e8e8">525</text><line x1="2" y1="55.5" x2="598" y2="55.5" stroke="#c8c8c8" stroke-width="1"/><line x1="20.5" y1="52" x2="20.5" y2="55.5" stroke="#c8c8c8" stroke-width="1"/><line x1="40.5" y1="52" x2="40.5" y2="55.5" stroke="#c8c8c8" stroke-width="1"/><line x1="80.5" y1="52" x2="80.5" y2="55.5" stroke="#c8c8c8" stroke-width="1"/><line x1="100.5" y1="52" x2="100.5" y2="55.5" stroke="#c8c8c8" stroke-width="1"/><line x1="120.5" y1="52" x2="120.5" y2="55.5" stroke="#c8c8c8" stroke-width="1"/><line x1="140.5" y1="52" x2="140.5" y2="55.5" stroke="#c8c8c8" stroke-width="1"/><line x1="180.5" y1="52" x2="180.5" y2="55.5" stroke="#c8c8c8" stroke-width="1"/><line x1="200.5" y1="52" x2="200.5" y2="55.5" stroke="#c8c8c8" stroke-width="1"/><line x1="220.5" y1="52" x2="220.5" y2="55.5" stroke="#c8c8c8" stroke-width="1"/><line x1="240.5" y1="52" x2="240.5" y2="55.5" stroke="#c8c8c8" stroke-width="1"/><line x1="280.5" y1="52" x2="280.5" y2="55.5" stroke="#c8c8c8" stroke-width="1"/><line x1="300.5" y1="52" x2="300.5" y2="55.5" stroke="#c8c8c8" stroke-width="1"/><line x1="320.5" y1="52" x2="320.5" y2="55.5" stroke="#c8c8c8" stroke-width="1"/><line x1="340.5" y1="52" x2="340.5" y2="55.5" stroke="#c8c8c8" stroke-width="1"/><line x1="380.5" y1="52" x2="380.5" y2="55.5" stroke="#c8c8c8" stroke-width="1"/><line x1="400.5" y1="52" x2="400.5" y2="55.5" stroke="#c8c8c8" stroke-width="1"/><line x1="420.5" y1="52" x2="420.5" y2="55.5" stroke="#c8c8c8" stroke-width="1"/><line x1="440.5" y1="52" x2="440.5" y2="55.5" stroke="#c8c8c8" stroke-width="1"/><line x1="480.5" y1="52" x2="480.5" y2="55.5" stroke="#c8c8c8" stroke-width="1"/><line x1="500.5" y1="52" x2="500.5" y2="55.5" stroke="#c8c8c8" stroke-width="1"/><line x1="520.5" y1="52" x2="520.5" y2="55.5" stroke="#c8c8c8" stroke-width="1"/><line x1="540.5" y1="52" x2="540.5" y2="55.5" stroke="#c8c8c8" stroke-width="1"/><line x1="580.5" y1="52" x2="580.5" y2="55.5" stroke="#c8c8c8" stroke-width="1"/><line x1="2" y1="230.5" x2="598" y2="230.5" stroke="#d8d8d8" stroke-width="1"/><text x="6.5" y="70.5" font-family="Liberation Sans" font-size="9" fill="#e0e0e0">...</text><text x="26.5" y="70.5" font-family="Liberation Sans" font-size="9" fill="#e0e0e0">...</text><text x="46.5" y="70.5" font-family="Liberation Sans" font-size="9" fill="#e0e0e0">...</text><text x="66.5" y="70.5" font-family="Liberation Sans" font-size="9" fill="#e0e0e0">...</text><text x="86.5" y="70.5" font-family="Liberation Sans" font-size="9" fill="#e0e0e0">...</text><text x="106.5" y="70.5" font-family="Liberation Sans" font-size="9" fill="#e0e0e0">...</text><text x="126.5" y="70.5" font-family="Liberation Sans" font-size="9" fill="#e0e0e0">...</text><text x="146.5" y="70.5" font-family="Liberation Sans" font-size="9" fill="#e0e0e0">...</text><text x="166.5" y="70.5" font-family="Liberation Sans" font-size="9" fill="#e0e0e0">...</text><text x="186.5" y="70.5" font-family="Liberation Sans" font-size="9" fill="#e0e0e0">...</text><text x="206.5" y="70.5" font-family="Liberation Sans" font-size="9" fill="#e0e0e0">...</text><text x="226.5" y="70.5" font-family="Liberation Sans" font-size="9" fill="#e0e0e0">...</text><text x="246.5" y="70.5" font-family="Liberation Sans" font-size="9" fill="#e0e0e0">...</text><text x="266.5" y="70.5" font-family="Liberation Sans" font-size="9" fill="#e0e0e0">...</text><text x="286.5" y="70.5" font-family="Liberation Sans" font-size="9" fill="#e0e0e0">...</text><text x="306.5" y="70.5" font-family="Liberation Sans" font-size="9" fill="#e0e0e0">...</text><text x="326.5" y="70.5" font-family="Liberation Sans" font-size="9" fill="#e0e0e0">...</text><text x="346.5" y="70.5" font-family="Liberation Sans" font-size="9" fill="#e0e0e0">...</text><text x="366.5" y="70.5" font-family="Liberation Sans" font-size="9" fill="#e0e0e0">...</text><text x="386.5" y="70.5" font-family="Liberation Sans" font-size="9" fill="#e0e0e0">...</text><text x="406.5" y="70.5" font-family="Liberation Sans" font-size="9" fill="#e0e0e0">...</text><text x="426.5" y="70.5" font-family="Liberation Sans" font-size="9" fill="#e0e0e0">...</text><text x="446.5" y="70.5" font-family="Liberation Sans" font-size="9" fill="#e0e0e0">...</text><text x="466.5" y="70.5" font-family="Liberation Sans" font-size="9" fill="#e0e0e0">...</text><text x="486.5" y="70.5" font-family="Liberation Sans" font-size="9" fill="#e0e0e0">...</text><text x="506.5" y="70.5" font-family="Liberation Sans" font-size="9" fill="#e0e0e0">...</text><text x="526.5" y="70.5" font-family="Liberation Sans" font-size="9" fill="#e0e0e0">...</text><text x="546.5" y="70.5" font-family="Liberation Sans" font-size="9" fill="#e0e0e0">...</text><text x="566.5" y="70.5" font-family="Liberation Sans" font-size="9" fill="#e0e0e0">...</text><text x="586.5" y="70.5" font-family="Liberation Sans" font-size="9" fill="#e0e0e0">...</text><path d="M6,60.5 L16.5,60.5 M6,74.5 L16.5,74.5 M24.5,60.5 L36.5,60.5 M24.5,74.5 L36.5,74.5 M44.5,60.5 L56.5,60.5 M44.5,74.5 L56.5,74.5 M64.5,60.5 L76.5,60.5 M64.5,74.5 L76.5,74.5 M84.5,60.5 L96.5,60.5 M84.5,74.5 L96.5,74.5 M104.5,60.5 L116.5,60.5 M104.5,74.5 L116.5,74.5 M124.5,60.5 L136.5,60.5 M124.5,74.5 L136.5,74.5 M144.5,60.5 L156.5,60.5 M144.5,74.5 L156.5,74.5 M164.5,60.5 L176.5,60.5 M164.5,74.5 L176.5,74.5 M184.5,60.5 L196.5,60.5 M184.5,74.5 L196.5,74.5 M204.5,60.5 L216.5,60.5 M204.5,74.5 L216.5,74.5 M224.5,60.5 L236.5,60.5 M224.5,74.5 L236.5,74.5 M244.5,60.5 L256.5,60.5 M244.5,74.5 L256.5,74.5 M264.5,60.5 L276.5,60.5 M264.5,74.5 L276.5,74.5 M284.5,60.5 L296.5,60.5 M284.5,74.5 L296.5,74.5 M304.5,60.5 L316.5,60.5 M304.5,74.5 L316.5,74.5 M324.5,60.5 L336.5,60.5 M324.5,74.5 L336.5,74.5 M344.5,60.5 L356.5,60.5 M344.5,74.5 L356.5,74.5 M364.5,60.5 L376.5,60.5 M364.5,74.5 L376.5,74.5 M384.5,60.5 L396.5,60.5 M384.5,74.5 L396.5,74.5 M404.5,60.5 L416.5,60.5 M404.5,74.5 L416.5,74.5 M424.5,60.5 L436.5,60.5 M424.5,74.5 L436.5,74.5 M444.5,60.5 L456.5,60.5 M444.5,74.5 L456.5,74.5 M464.5,60.5 L476.5,60.5 M464.5,74.5 L476.5,74.5 M484.5,60.5 L496.5,60.5 M484.5,74.5 L496.5,74.5 M504.5,60.5 L516.5,60.5 M504.5,74.5 L516.5,74.5 M524.5,60.5 L536.5,60.5 M524.5,74.5 L536.5,74.5 M544.5,60.5 L556.5,60.5 M544.5,74.5 L556.5,74.5 M564.5,60.5 L576.5,60.5 M564.5,74.5 L576.5,74.5 M584.5,60.5 L594,60.5 M584.5,74.5 L594,74.5 M16.5,60.5 L24.5,74.5 M16.5,74.5 L24.5,60.5 M36.5,60.5 L44.5,74.5 M36.5,74.5 L44.5,60.5 M56.5,60.5 L64.5,74.5 M56.5,74.5 L64.5,60.5 M76.5,60.5 L84.5,74.5 M76.5,74.5 L84.5,60.5 M96.5,60.5 L104.5,74.5 M96.5,74.5 L104.5,60.5 M116.5,60.5 L124.5,74.5 M116.5,74.5 L124.5,60.5 M136.5,60.5 L144.5,74.5 M136.5,74.5 L144.5,60.5 M156.5,60.5 L164.5,74.5 M156.5,74.5 L164.5,60.5 M176.5,60.5 L184.5,74.5 M176.5,74.5 L184.5,60.5 M196.5,60.5 L204.5,74.5 M196.5,74.5 L204.5,60.5 M216.5,60.5 L224.5,74.5 M216.5,74.5 L224.5,60.5 M236.5,60.5 L244.5,74.5 M236.5,74.5 L244.5,60.5 M256.5,60.5 L264.5,74.5 M256.5,74.5 L264.5,60.5 M276.5,60.5 L284.5,74.5 M276.5,74.5 L284.5,60.5 M296.5,60.5 L304.5,74.5 M296.5,74.5 L304.5,60.5 M316.5,60.5 L324.5,74.5 M316.5,74.5 L324.5,60.5 M336.5,60.5 L344.5,74.5 M336.5,74.5 L344.5,60.5 M356.5,60.5 L364.5,74.5 M356.5,74.5 L364.5,60.5 M376.5,60.5 L384.5,74.5 M376.5,74.5 L384.5,60.5 M396.5,60.5 L404.5,74.5 M396.5,74.5 L404.5,60.5 M416.5,60.5 L424.5,74.5 M416.5,74.5 L424.5,60.5 M436.5,60.5 L444.5,74.5 M436.5,74.5 L444.5,60.5 M456.5,60.5 L464.5,74.5 M456.5,74.5 L464.5,60.5 M476.5,60.5 L484.5,74.5 M476.5,74.5 L484.5,60.5 M496.5,60.5 L504.5,74.5 M496.5,74.5 L504.5,60.5 M516.5,60.5 L524.5,74.5 M516.5,74.5 L524.5,60.5 M536.5,60.5 L544.5,74.5 M536.5,74.5 L544.5,60.5 M556.5,60.5 L564.5,74.5 M556.5,74.5 L564.5,60.5 M576.5,60.5 L584.5,74.5 M576.5,74.5 L584.5,60.5" stroke="#1ed21e" fill="none" stroke-width="1"/><path d="M2,80.5 H315.5 L325.5,94.5 H598 M2,94.5 H315.5 L325.5,80.5 H598" stroke="#1ed21e" fill="none" stroke-width="1"/><text x="155" y="91.5" font-family="Liberation Sans" font-size="10.5" fill="#e8e8e8" text-anchor="middle">43</text><text x="458" y="91.5" font-family="Liberation Sans" font-size="10.5" fill="#e8e8e8" text-anchor="middle">40</text><path d="M2,100.5 H295.5 L305.5,114.5 H598 M2,114.5 H295.5 L305.5,100.5 H598" stroke="#1ed21e" fill="none" stroke-width="1"/><text x="145" y="111.5" font-family="Liberation Sans" font-size="10.5" fill="#e8e8e8" text-anchor="middle">63</text><text x="448" y="111.5" font-family="Liberation Sans" font-size="10.5" fill="#e8e8e8" text-anchor="middle">40</text><line x1="1" y1="134" x2="598" y2="134" stroke="#1ed21e" stroke-width="2"/><rect x="300.5" y="140.5" width="40.0" height="14.0" fill="#0b3f0b"/><path d="M2,154.5 H300.5 M300.5,140.5 V154.5 M300.5,140.5 H340.5 M340.5,140.5 V154.5 M340.5,154.5 H598" stroke="#1ed21e" fill="none" stroke-width="1.2"/><rect x="2" y="160.5" width="318.5" height="14.0" fill="#0b3f0b"/><rect x="340.5" y="160.5" width="257.5" height="14.0" fill="#0b3f0b"/><path d="M2,160.5 H320.5 M320.5,160.5 V174.5 M320.5,174.5 H340.5 M340.5,160.5 V174.5 M340.5,160.5 H598" stroke="#1ed21e" fill="none" stroke-width="1.2"/><rect x="320.5" y="180.5" width="20.0" height="14.0" fill="#0b3f0b"/><path d="M2,194.5 H320.5 M320.5,180.5 V194.5 M320.5,180.5 H340.5 M340.5,180.5 V194.5 M340.5,194.5 H598" stroke="#1ed21e" fill="none" stroke-width="1.2"/><rect x="340.5" y="200.5" width="257.5" height="14.0" fill="#0b3f0b"/><path d="M2,214.5 H340.5 M340.5,200.5 V214.5 M340.5,200.5 H598" stroke="#1ed21e" fill="none" stroke-width="1.2"/><line x1="299.5" y1="11" x2="299.5" y2="231" stroke="#e6e62a" stroke-width="2"/><rect x="299" y="4" width="26" height="11" fill="#d8d828"/><text x="301" y="13" font-family="Liberation Sans" font-size="9.5" fill="#111">512</text><rect x="294" y="24" width="12" height="12" fill="#d81818"/><text x="296.5" y="33" font-family="Liberation Sans" font-size="9" fill="#222">T</text></svg><div style="left:1893px;top:487px;width:16px;height:272px;background:#f3f4f3"></div><svg style="position:absolute;left:1897px;top:491px;" width="9" height="6" viewBox="0 0 9 6"><path d="M0 5 L4.5 0.5 L9 5 Z" fill="#333"/></svg><svg style="position:absolute;left:1897px;top:746px;" width="9" height="6" viewBox="0 0 9 6"><path d="M0 0.5 L4.5 5 L9 0.5 Z" fill="#333"/></svg><div style="left:1291px;top:759px;width:618px;height:14px;background:#e9eae9"></div><svg style="position:absolute;left:1295px;top:762px;" width="6" height="8" viewBox="0 0 6 8"><path d="M5 0 L0.5 4 L5 8 Z" fill="#333"/></svg><svg style="position:absolute;left:1898px;top:762px;" width="6" height="8" viewBox="0 0 6 8"><path d="M0.5 0 L5 4 L0.5 8 Z" fill="#333"/></svg><div style="left:1590px;top:759px;width:15px;height:12px;border:1px solid #999;border-radius:2px;background:linear-gradient(#fff,#ddd)"></div><div style="left:1593px;top:762px;width:1px;height:7px;background:#444"></div><div style="left:1596px;top:762px;width:1px;height:7px;background:#444"></div><div style="left:1599px;top:762px;width:1px;height:7px;background:#444"></div><div style="left:1602px;top:762px;width:1px;height:7px;background:#444"></div><div style="left:1891px;top:758px;width:18px;height:15px;background:#e9eae9"></div><div style="left:1058px;top:783px;width:2px;height:2px;background:#9a9a9a"></div><div style="left:1062px;top:783px;width:2px;height:2px;background:#9a9a9a"></div><div style="left:1066px;top:783px;width:2px;height:2px;background:#9a9a9a"></div><div style="left:1070px;top:783px;width:2px;height:2px;background:#9a9a9a"></div><div style="left:1074px;top:783px;width:2px;height:2px;background:#9a9a9a"></div><div style="left:1078px;top:783px;width:2px;height:2px;background:#9a9a9a"></div><div style="left:1082px;top:783px;width:2px;height:2px;background:#9a9a9a"></div><div style="left:1086px;top:783px;width:2px;height:2px;background:#9a9a9a"></div><div style="left:1090px;top:783px;width:2px;height:2px;background:#9a9a9a"></div><div style="left:238px;top:801px;width:1677px;height:8px;background:#e8e9e8"></div><div class="t" style="left:244px;top:793.00px;font-size:13px;font-family:'Liberation Sans', sans-serif;color:#000;letter-spacing:0.2px">Tcl Console</div><svg style="position:absolute;left:1830px;top:795px;" width="10" height="10" viewBox="0 0 10 10"><line x1="0" y1="8.5" x2="10" y2="8.5" stroke="#111" stroke-width="1.2"/></svg><svg style="position:absolute;left:1850px;top:795px;" width="10" height="10" viewBox="0 0 10 10"><rect x="0.6" y="0.6" width="8.8" height="8.8" fill="none" stroke="#111" stroke-width="1.2"/></svg><svg style="position:absolute;left:1869px;top:795px;" width="10" height="10" viewBox="0 0 10 10"><path d="M0.75 3 L0.75 9.25 L7 9.25" fill="none" stroke="#111" stroke-width="1.5"/><path d="M3 7 L8.5 1.5" stroke="#111" stroke-width="1.3"/><path d="M5 0.5 L9.5 0.5 L9.5 5 Z" fill="#111"/></svg><svg style="position:absolute;left:1890px;top:795px;" width="10" height="10" viewBox="0 0 10 10"><path d="M1 1 L8.5 8.5 M8.5 1 L1 8.5" stroke="#111" stroke-width="1.1"/></svg><svg style="position:absolute;left:243px;top:813px;" width="16" height="16" viewBox="0 0 16 16"><rect x="1" y="1" width="14" height="3.5" fill="#fbe6b0" stroke="#e09a30" stroke-width="1.4"/><rect x="1" y="11.5" width="14" height="3.5" fill="#fbe6b0" stroke="#e09a30" stroke-width="1.4"/><path d="M3.5 3 L12.5 3 L8 7.5 Z" fill="#22b822"/><path d="M3.5 13 L12.5 13 L8 8.5 Z" fill="#22b822"/></svg><svg style="position:absolute;left:243px;top:835px;" width="16" height="16" viewBox="0 0 16 16"><rect x="1" y="4.5" width="14" height="3" fill="#fbe6b0" stroke="#e09a30" stroke-width="1.2"/><rect x="1" y="9.5" width="14" height="3" fill="#fbe6b0" stroke="#e09a30" stroke-width="1.2"/><path d="M4 5 L12 5 L8 0.5 Z" fill="#22b822"/><path d="M4 12 L12 12 L8 16 Z" fill="#22b822"/></svg><svg style="position:absolute;left:244px;top:857px;" width="14" height="16" viewBox="0 0 14 16"><rect x="1" y="1" width="4" height="13" fill="#a8c4ec" stroke="#3a68b0"/><rect x="8" y="1" width="4" height="13" fill="#a8c4ec" stroke="#3a68b0"/></svg><svg style="position:absolute;left:243px;top:879px;" width="17" height="17" viewBox="0 0 17 17"><rect x="6.5" y="1.5" width="9" height="11" fill="#eef3fa" stroke="#5a88c8"/><path d="M8 4 H14 M8 6 H14 M8 8 H14" stroke="#5a88c8"/><circle cx="4" cy="12" r="3.2" fill="#b8cce8" stroke="#333" stroke-width="1.2"/><circle cx="9" cy="12" r="3.2" fill="#b8cce8" stroke="#333" stroke-width="1.2"/></svg><svg style="position:absolute;left:243px;top:901px;" width="17" height="17" viewBox="0 0 17 17"><rect x="0.5" y="0.5" width="10" height="12" fill="#f0f4fb" stroke="#6d94d0"/><rect x="5.5" y="3.5" width="10" height="12" fill="#eef3fb" stroke="#6d94d0"/><path d="M7 7 H14 M7 9 H14 M7 11 H14 M7 13 H14" stroke="#6d94d0"/></svg><svg style="position:absolute;left:244px;top:925px;" width="14" height="14" viewBox="0 0 14 14"><path d="M1.5 1.5 L12.5 12.5 M12.5 1.5 L1.5 12.5" stroke="#3a4a6a" stroke-width="2.2"/></svg><div style="left:263px;top:810px;width:1641px;height:160px;box-sizing:border-box;border:1px solid #a8a8a8;"></div><div style="left:279px;top:812px;width:0;height:140px;border-left:1px dotted #a0a0a0"></div><div class="t" style="left:286px;top:816.34px;font-size:10px;font-family:'Liberation Mono', monospace;color:#0808f4;white-space:pre">display_hw_ila_data [upload_hw_ila_data hw_ila_1]</div><svg style="position:absolute;left:275px;top:815px;" width="10" height="11" viewBox="0 0 10 11"><path d="M0.5 0.5 H9.5 V6 L5 10.5 L0.5 6 Z" fill="#fafafa" stroke="#aaa"/><path d="M2.5 4 H7.5" stroke="#999"/></svg><div class="t" style="left:286px;top:833.34px;font-size:10px;font-family:'Liberation Mono', monospace;color:#000;white-space:pre">INFO: [Labtools 27-1966] The ILA core &#x27;hw_ila_1&#x27; triggered at 2015-Oct-09 12:54:39</div><svg style="position:absolute;left:275px;top:831px;" width="10" height="11" viewBox="0 0 10 11"><path d="M0.5 10.5 H9.5 V5 L5 0.5 L0.5 5 Z" fill="#fafafa" stroke="#aaa"/><path d="M2.5 7 H7.5" stroke="#999"/></svg><div class="t" style="left:286px;top:850.34px;font-size:10px;font-family:'Liberation Mono', monospace;color:#0808f4;white-space:pre">run_hw_ila hw_ila_1</div><svg style="position:absolute;left:275px;top:849px;" width="10" height="11" viewBox="0 0 10 11"><path d="M0.5 0.5 H9.5 V6 L5 10.5 L0.5 6 Z" fill="#fafafa" stroke="#aaa"/><path d="M2.5 4 H7.5" stroke="#999"/></svg><div class="t" style="left:286px;top:867.34px;font-size:10px;font-family:'Liberation Mono', monospace;color:#000;white-space:pre">INFO: [Labtools 27-1964] The ILA core &#x27;hw_ila_1&#x27; trigger was armed at 2015-Oct-09 13:01:21</div><svg style="position:absolute;left:275px;top:865px;" width="10" height="11" viewBox="0 0 10 11"><path d="M0.5 10.5 H9.5 V5 L5 0.5 L0.5 5 Z" fill="#fafafa" stroke="#aaa"/><path d="M2.5 7 H7.5" stroke="#999"/></svg><div class="t" style="left:286px;top:884.34px;font-size:10px;font-family:'Liberation Mono', monospace;color:#0808f4;white-space:pre">wait_on_hw_ila hw_ila_1</div><div class="t" style="left:286px;top:901.34px;font-size:10px;font-family:'Liberation Mono', monospace;color:#0808f4;white-space:pre">display_hw_ila_data [upload_hw_ila_data hw_ila_1]</div><svg style="position:absolute;left:275px;top:900px;" width="10" height="11" viewBox="0 0 10 11"><path d="M0.5 0.5 H9.5 V6 L5 10.5 L0.5 6 Z" fill="#fafafa" stroke="#aaa"/><path d="M2.5 4 H7.5" stroke="#999"/></svg><div class="t" style="left:286px;top:918.34px;font-size:10px;font-family:'Liberation Mono', monospace;color:#000;white-space:pre">INFO: [Labtools 27-1966] The ILA core &#x27;hw_ila_1&#x27; triggered at 2015-Oct-09 13:01:26</div><svg style="position:absolute;left:275px;top:916px;" width="10" height="11" viewBox="0 0 10 11"><path d="M0.5 10.5 H9.5 V5 L5 0.5 L0.5 5 Z" fill="#fafafa" stroke="#aaa"/><path d="M2.5 7 H7.5" stroke="#999"/></svg><div style="left:287px;top:954px;width:1601px;height:14px;background:#e9eae9"></div><svg style="position:absolute;left:291px;top:957px;" width="6" height="8" viewBox="0 0 6 8"><path d="M5 0 L0.5 4 L5 8 Z" fill="#333"/></svg><svg style="position:absolute;left:1878px;top:957px;" width="6" height="8" viewBox="0 0 6 8"><path d="M0.5 0 L5 4 L0.5 8 Z" fill="#333"/></svg><div style="left:301px;top:954px;width:851px;height:12px;border:1px solid #9a9a9a;border-radius:3px;background:linear-gradient(#ffffff,#f2f2f2 40%,#d0d0d0 60%,#c6c6c6)"></div><div style="left:724px;top:957px;width:1px;height:8px;background:#555"></div><div style="left:727px;top:957px;width:1px;height:8px;background:#555"></div><div style="left:730px;top:957px;width:1px;height:8px;background:#555"></div><div style="left:1888px;top:811px;width:15px;height:143px;background:#eeefee"></div><svg style="position:absolute;left:1891px;top:815px;" width="9" height="6" viewBox="0 0 9 6"><path d="M0 5 L4.5 0.5 L9 5 Z" fill="#333"/></svg><svg style="position:absolute;left:1891px;top:943px;" width="9" height="6" viewBox="0 0 9 6"><path d="M0 0.5 L4.5 5 L9 0.5 Z" fill="#333"/></svg><div style="left:1888px;top:917px;width:13px;height:18px;border:1px solid #999;border-radius:2px;background:linear-gradient(90deg,#fff,#ddd)"></div><div style="left:1891px;top:922px;width:8px;height:2px;background:#555"></div><div style="left:1891px;top:926px;width:8px;height:2px;background:#555"></div><div style="left:1891px;top:930px;width:8px;height:2px;background:#555"></div><div style="left:1905px;top:903px;width:8px;height:3px;background:#eaea10"></div><div style="left:1905px;top:935px;width:8px;height:3px;background:#eaea10"></div><div style="left:1905px;top:939px;width:8px;height:3px;background:#eaea10"></div><div style="left:1905px;top:947px;width:8px;height:4px;background:#eaea10"></div><div style="left:263px;top:970px;width:1637px;height:18px;border:2px solid #8a8a8a;border-right:1px solid #a8a8a8;background:#f8f9f9"></div><div class="t" style="left:271px;top:977.34px;font-size:10px;font-family:'Liberation Mono', monospace;color:#a0a0a0;white-space:pre">Type a Tcl command here</div><div style="left:367px;top:994px;width:1548px;height:1px;background:#b8b8b8"></div><svg style="position:absolute;left:235px;top:993px;" width="34" height="22" viewBox="0 0 34 22"><path d="M0 0.5 H4 L22 19 Q24 20.5 28 20.5 H34" fill="none" stroke="#999"/></svg><svg style="position:absolute;left:264px;top:998px;" width="14" height="13" viewBox="0 0 14 13"><rect x="1" y="1" width="12" height="8" fill="#8ab8f0" stroke="#3a5a90"/><rect x="0" y="10" width="14" height="3" fill="#a0a8b8"/></svg><div class="t" style="left:280px;top:998.15px;font-size:14px;font-family:'Liberation Sans', sans-serif;font-weight:bold;color:#000;letter-spacing:0.1px">Tcl Console</div><div style="left:368px;top:995px;width:87px;height:18px;border:1px solid #b8b8b8;border-top:0;border-radius:0 0 3px 3px"></div><div class="t" style="left:392px;top:999.00px;font-size:13px;font-family:'Liberation Sans', sans-serif;color:#000;letter-spacing:-0.3px">Messages</div><div style="left:457px;top:995px;width:121px;height:18px;border:1px solid #b8b8b8;border-top:0;border-radius:0 0 3px 3px"></div><div class="t" style="left:476px;top:999.00px;font-size:13px;font-family:'Liberation Sans', sans-serif;color:#000;letter-spacing:0.4px">Serial I/O Links</div><div style="left:580px;top:995px;width:128px;height:18px;border:1px solid #b8b8b8;border-top:0;border-radius:0 0 3px 3px"></div><div class="t" style="left:602px;top:999.00px;font-size:13px;font-family:'Liberation Sans', sans-serif;color:#000;letter-spacing:0.3px">Serial I/O Scans</div><svg style="position:absolute;left:375px;top:999px;" width="14" height="12" viewBox="0 0 14 12"><ellipse cx="7" cy="5.5" rx="6" ry="4.5" fill="#a8d0f8" stroke="#4a88d8"/><path d="M3 9 L2 12 L6 9.5" fill="#4a88d8"/></svg><svg style="position:absolute;left:460px;top:998px;" width="14" height="14" viewBox="0 0 14 14"><circle cx="4.5" cy="4.5" r="3" fill="none" stroke="#6a88b8" stroke-width="1.6"/><circle cx="9.5" cy="9.5" r="3" fill="none" stroke="#6a88b8" stroke-width="1.6"/></svg><svg style="position:absolute;left:585px;top:998px;" width="13" height="13" viewBox="0 0 13 13"><rect x="0.5" y="0.5" width="12" height="12" fill="#f06020" stroke="#a03010"/><circle cx="6.5" cy="6.5" r="3.5" fill="#f8e040"/><circle cx="6.5" cy="6.5" r="2" fill="#4aa8f0"/></svg>
</body></html>
